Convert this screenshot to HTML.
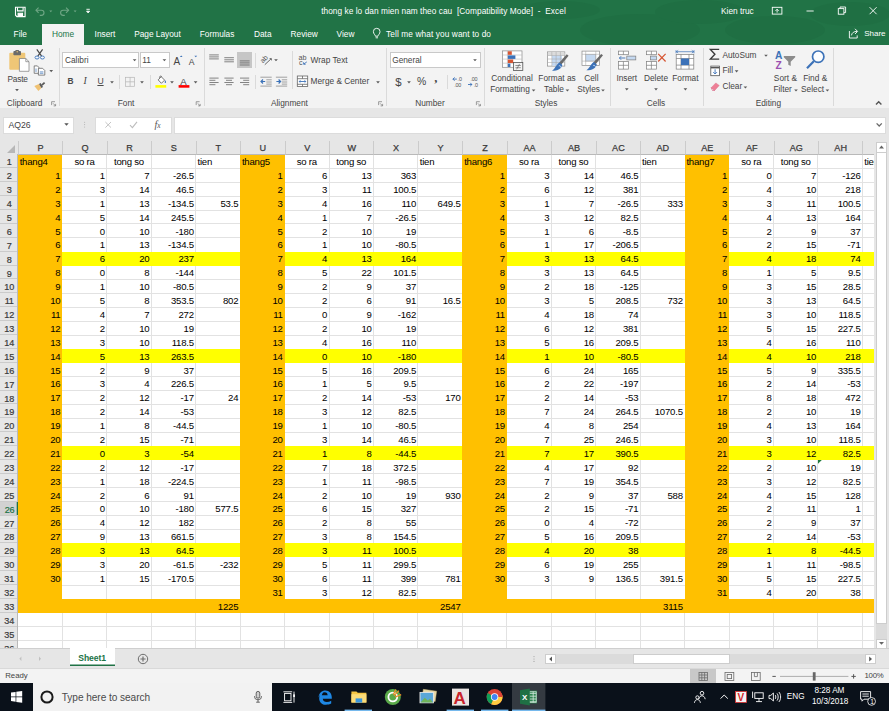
<!DOCTYPE html>
<html lang="en"><head><meta charset="utf-8"><title>thong ke lo dan mien nam theo cau - Excel</title>
<style>
*{box-sizing:border-box;margin:0;padding:0}
html,body{width:889px;height:711px;overflow:hidden;background:#fff}
body{position:relative;font-family:"Liberation Sans",sans-serif;font-size:8.4px;color:#333}
.abs{position:absolute}
#grid{position:absolute;left:0;top:0;width:874px;height:648px;overflow:hidden}
.fo{position:absolute;background:#ffc000}
.fy{position:absolute;background:#ffff00}
.hl{position:absolute;height:1px;background:#e2e2e2}
.vl{position:absolute;width:1px;background:#e2e2e2}
.c{position:absolute;height:13.89px;line-height:14.6px;font-size:9.6px;color:#000;white-space:nowrap;letter-spacing:-0.22px}
.c.r{text-align:right;padding-right:1.8px}
.c.l{text-align:left;padding-left:1.8px}
.c.m{text-align:center}
.tri{position:absolute;width:0;height:0;border-top:3.5px solid #1e7a3c;border-right:3.5px solid transparent}
#colhdr{position:absolute;left:0;top:135px;width:874px;height:20px;background:#e6e6e6;overflow:hidden}
#colhdr .corner{position:absolute;left:7px;top:9.5px;width:0;height:0;border-bottom:8px solid #b7b7b7;border-left:8px solid transparent}
.ch{position:absolute;top:6.3px;height:13.7px;line-height:14.6px;text-align:center;font-size:9.1px;color:#3a3a3a;-webkit-text-stroke:0.25px #3a3a3a;border-left:1px solid #cbcbcb;border-bottom:1px solid #b9b9b9}
.ch.last{border-left:1px solid #cbcbcb}
#rowhdr{position:absolute;left:0;top:154.45px;width:17.85px;height:493.55px;background:#e6e6e6;overflow:hidden}
#rowhdr .rline{position:absolute;left:16.95px;top:0;width:0.9px;height:100%;background:#b9b9b9}
.rh{position:absolute;left:0;width:16.95px;padding-left:1.4px;height:13.89px;line-height:16.6px;text-align:center;font-size:9.1px;color:#3a3a3a;-webkit-text-stroke:0.2px #3a3a3a;border-bottom:1px solid #cbcbcb;margin-top:-154.45px;letter-spacing:-0.2px}
.rh.sel{background:#d2d2d2;color:#217346;-webkit-text-stroke:0.2px #217346;box-shadow:inset -1.3px 0 0 #217346;width:17.85px;z-index:2}

#title{position:absolute;left:0;top:0;width:889px;height:44.5px;background:#217346;overflow:hidden}
#title .t{position:absolute;color:#fff;white-space:nowrap;font-size:8.3px;line-height:10px}
#hometab{position:absolute;left:42.2px;top:23.7px;width:41.8px;height:21px;background:#f3f3f3;color:#217346;font-size:8.3px;line-height:10px;text-align:center;padding-top:5.6px}
#ribbon{position:absolute;left:0;top:44.5px;width:889px;height:64px;background:#f3f3f3;border-bottom:1px solid #dadada}
#fbar{position:absolute;left:0;top:108.2px;width:889px;height:33.2px;background:#e6e6e6}
#fbar .box{position:absolute;top:8.5px;height:16.9px;background:#fff;border:1px solid #dcdcdc}
#fbar .t{position:absolute;font-size:8.7px;line-height:10px;color:#444;white-space:nowrap}

#ribbon .t{position:absolute;font-size:8.3px;line-height:10px;color:#444;white-space:nowrap}
#ribbon .tc{position:absolute;font-size:8.3px;line-height:10px;color:#444;white-space:nowrap;text-align:center;transform:translateX(-50%)}
#ribbon .sep{position:absolute;width:1px;background:#dadada}
#ribbon .inp{position:absolute;background:#fff;border:1px solid #c9c9c9;height:15.4px}
#ribbon .ar{position:absolute;width:0;height:0;border-left:1.9px solid transparent;border-right:1.9px solid transparent;border-top:2.1px solid #5a5a5a}

#vscroll{position:absolute;left:874px;top:141.4px;width:15px;height:506.6px;background:#e6e6e6}
#vscroll .b{position:absolute;left:2.400px;width:10.200px;background:#fff;border:1px solid #cdcdcd}
#vscroll .tr{position:absolute;left:2.400px;width:10.200px;top:1px;height:505.6px;background:#dbdbdb}
#tabbar{position:absolute;left:0;top:648px;width:889px;height:20px;background:#e6e6e6;border-top:1px solid #cfcfcf}
#sheet1{position:absolute;left:69.6px;top:-1px;width:45px;height:18.4px;background:#fff;box-shadow:inset 0 -1.6px 0 #217346;color:#217346;font-weight:bold;font-size:8.6px;line-height:10px;text-align:center;padding-top:5px;letter-spacing:-0.1px}
#hscroll .b{position:absolute;top:4.6px;height:10.6px;background:#fff;border:1px solid #cdcdcd}
#hscroll .tr{position:absolute;left:545px;width:330.6px;top:4.6px;height:10.6px;background:#dbdbdb}
#status{position:absolute;left:0;top:668px;width:889px;height:15.2px;background:#f3f3f3;border-top:1px solid #d9d9d9}
#status .t{position:absolute;font-size:7.8px;line-height:10px;color:#444;white-space:nowrap}
#taskbar{position:absolute;left:0;top:683px;width:889px;height:28px;background:#0a111a;overflow:hidden}
#search{position:absolute;left:33.2px;top:0;width:238.8px;height:28px;background:#f2f2f2}
#search .t{position:absolute;left:28.6px;top:8.8px;font-size:10.1px;line-height:12px;color:#4a4a4a;white-space:nowrap;letter-spacing:-0.05px}
#taskbar .w{position:absolute;color:#fff;white-space:nowrap;font-size:8.2px;line-height:10px}
</style></head>
<body>
<div id="grid">
<div class="fo" style="left:17.85px;top:154.45px;width:44.45px;height:458.37px"></div>
<div class="fo" style="left:240.1px;top:154.45px;width:44.45px;height:458.37px"></div>
<div class="fo" style="left:462.35px;top:154.45px;width:44.45px;height:458.37px"></div>
<div class="fo" style="left:684.6px;top:154.45px;width:44.45px;height:458.37px"></div>
<div class="fo" style="left:17.85px;top:598.93px;width:856.15px;height:13.89px"></div>
<div class="fy" style="left:62.3px;top:251.68px;width:177.8px;height:13.89px"></div>
<div class="fy" style="left:284.55px;top:251.68px;width:177.8px;height:13.89px"></div>
<div class="fy" style="left:506.8px;top:251.68px;width:177.8px;height:13.89px"></div>
<div class="fy" style="left:729.05px;top:251.68px;width:144.95px;height:13.89px"></div>
<div class="fy" style="left:62.3px;top:348.91px;width:177.8px;height:13.89px"></div>
<div class="fy" style="left:284.55px;top:348.91px;width:177.8px;height:13.89px"></div>
<div class="fy" style="left:506.8px;top:348.91px;width:177.8px;height:13.89px"></div>
<div class="fy" style="left:729.05px;top:348.91px;width:144.95px;height:13.89px"></div>
<div class="fy" style="left:62.3px;top:446.14px;width:177.8px;height:13.89px"></div>
<div class="fy" style="left:284.55px;top:446.14px;width:177.8px;height:13.89px"></div>
<div class="fy" style="left:506.8px;top:446.14px;width:177.8px;height:13.89px"></div>
<div class="fy" style="left:729.05px;top:446.14px;width:144.95px;height:13.89px"></div>
<div class="fy" style="left:62.3px;top:543.37px;width:177.8px;height:13.89px"></div>
<div class="fy" style="left:284.55px;top:543.37px;width:177.8px;height:13.89px"></div>
<div class="fy" style="left:506.8px;top:543.37px;width:177.8px;height:13.89px"></div>
<div class="fy" style="left:729.05px;top:543.37px;width:144.95px;height:13.89px"></div>
<div class="hl" style="left:62.3px;top:167.84px;width:177.8px"></div>
<div class="hl" style="left:284.55px;top:167.84px;width:177.8px"></div>
<div class="hl" style="left:506.8px;top:167.84px;width:177.8px"></div>
<div class="hl" style="left:729.05px;top:167.84px;width:144.95px"></div>
<div class="hl" style="left:62.3px;top:181.73px;width:177.8px"></div>
<div class="hl" style="left:284.55px;top:181.73px;width:177.8px"></div>
<div class="hl" style="left:506.8px;top:181.73px;width:177.8px"></div>
<div class="hl" style="left:729.05px;top:181.73px;width:144.95px"></div>
<div class="hl" style="left:62.3px;top:195.62px;width:177.8px"></div>
<div class="hl" style="left:284.55px;top:195.62px;width:177.8px"></div>
<div class="hl" style="left:506.8px;top:195.62px;width:177.8px"></div>
<div class="hl" style="left:729.05px;top:195.62px;width:144.95px"></div>
<div class="hl" style="left:62.3px;top:209.51px;width:177.8px"></div>
<div class="hl" style="left:284.55px;top:209.51px;width:177.8px"></div>
<div class="hl" style="left:506.8px;top:209.51px;width:177.8px"></div>
<div class="hl" style="left:729.05px;top:209.51px;width:144.95px"></div>
<div class="hl" style="left:62.3px;top:223.4px;width:177.8px"></div>
<div class="hl" style="left:284.55px;top:223.4px;width:177.8px"></div>
<div class="hl" style="left:506.8px;top:223.4px;width:177.8px"></div>
<div class="hl" style="left:729.05px;top:223.4px;width:144.95px"></div>
<div class="hl" style="left:62.3px;top:237.29px;width:177.8px"></div>
<div class="hl" style="left:284.55px;top:237.29px;width:177.8px"></div>
<div class="hl" style="left:506.8px;top:237.29px;width:177.8px"></div>
<div class="hl" style="left:729.05px;top:237.29px;width:144.95px"></div>
<div class="hl" style="left:62.3px;top:278.96px;width:177.8px"></div>
<div class="hl" style="left:284.55px;top:278.96px;width:177.8px"></div>
<div class="hl" style="left:506.8px;top:278.96px;width:177.8px"></div>
<div class="hl" style="left:729.05px;top:278.96px;width:144.95px"></div>
<div class="hl" style="left:62.3px;top:292.85px;width:177.8px"></div>
<div class="hl" style="left:284.55px;top:292.85px;width:177.8px"></div>
<div class="hl" style="left:506.8px;top:292.85px;width:177.8px"></div>
<div class="hl" style="left:729.05px;top:292.85px;width:144.95px"></div>
<div class="hl" style="left:62.3px;top:306.74px;width:177.8px"></div>
<div class="hl" style="left:284.55px;top:306.74px;width:177.8px"></div>
<div class="hl" style="left:506.8px;top:306.74px;width:177.8px"></div>
<div class="hl" style="left:729.05px;top:306.74px;width:144.95px"></div>
<div class="hl" style="left:62.3px;top:320.63px;width:177.8px"></div>
<div class="hl" style="left:284.55px;top:320.63px;width:177.8px"></div>
<div class="hl" style="left:506.8px;top:320.63px;width:177.8px"></div>
<div class="hl" style="left:729.05px;top:320.63px;width:144.95px"></div>
<div class="hl" style="left:62.3px;top:334.52px;width:177.8px"></div>
<div class="hl" style="left:284.55px;top:334.52px;width:177.8px"></div>
<div class="hl" style="left:506.8px;top:334.52px;width:177.8px"></div>
<div class="hl" style="left:729.05px;top:334.52px;width:144.95px"></div>
<div class="hl" style="left:62.3px;top:376.19px;width:177.8px"></div>
<div class="hl" style="left:284.55px;top:376.19px;width:177.8px"></div>
<div class="hl" style="left:506.8px;top:376.19px;width:177.8px"></div>
<div class="hl" style="left:729.05px;top:376.19px;width:144.95px"></div>
<div class="hl" style="left:62.3px;top:390.08px;width:177.8px"></div>
<div class="hl" style="left:284.55px;top:390.08px;width:177.8px"></div>
<div class="hl" style="left:506.8px;top:390.08px;width:177.8px"></div>
<div class="hl" style="left:729.05px;top:390.08px;width:144.95px"></div>
<div class="hl" style="left:62.3px;top:403.97px;width:177.8px"></div>
<div class="hl" style="left:284.55px;top:403.97px;width:177.8px"></div>
<div class="hl" style="left:506.8px;top:403.97px;width:177.8px"></div>
<div class="hl" style="left:729.05px;top:403.97px;width:144.95px"></div>
<div class="hl" style="left:62.3px;top:417.86px;width:177.8px"></div>
<div class="hl" style="left:284.55px;top:417.86px;width:177.8px"></div>
<div class="hl" style="left:506.8px;top:417.86px;width:177.8px"></div>
<div class="hl" style="left:729.05px;top:417.86px;width:144.95px"></div>
<div class="hl" style="left:62.3px;top:431.75px;width:177.8px"></div>
<div class="hl" style="left:284.55px;top:431.75px;width:177.8px"></div>
<div class="hl" style="left:506.8px;top:431.75px;width:177.8px"></div>
<div class="hl" style="left:729.05px;top:431.75px;width:144.95px"></div>
<div class="hl" style="left:62.3px;top:473.42px;width:177.8px"></div>
<div class="hl" style="left:284.55px;top:473.42px;width:177.8px"></div>
<div class="hl" style="left:506.8px;top:473.42px;width:177.8px"></div>
<div class="hl" style="left:729.05px;top:473.42px;width:144.95px"></div>
<div class="hl" style="left:62.3px;top:487.31px;width:177.8px"></div>
<div class="hl" style="left:284.55px;top:487.31px;width:177.8px"></div>
<div class="hl" style="left:506.8px;top:487.31px;width:177.8px"></div>
<div class="hl" style="left:729.05px;top:487.31px;width:144.95px"></div>
<div class="hl" style="left:62.3px;top:501.2px;width:177.8px"></div>
<div class="hl" style="left:284.55px;top:501.2px;width:177.8px"></div>
<div class="hl" style="left:506.8px;top:501.2px;width:177.8px"></div>
<div class="hl" style="left:729.05px;top:501.2px;width:144.95px"></div>
<div class="hl" style="left:62.3px;top:515.09px;width:177.8px"></div>
<div class="hl" style="left:284.55px;top:515.09px;width:177.8px"></div>
<div class="hl" style="left:506.8px;top:515.09px;width:177.8px"></div>
<div class="hl" style="left:729.05px;top:515.09px;width:144.95px"></div>
<div class="hl" style="left:62.3px;top:528.98px;width:177.8px"></div>
<div class="hl" style="left:284.55px;top:528.98px;width:177.8px"></div>
<div class="hl" style="left:506.8px;top:528.98px;width:177.8px"></div>
<div class="hl" style="left:729.05px;top:528.98px;width:144.95px"></div>
<div class="hl" style="left:62.3px;top:570.65px;width:177.8px"></div>
<div class="hl" style="left:284.55px;top:570.65px;width:177.8px"></div>
<div class="hl" style="left:506.8px;top:570.65px;width:177.8px"></div>
<div class="hl" style="left:729.05px;top:570.65px;width:144.95px"></div>
<div class="hl" style="left:62.3px;top:584.54px;width:177.8px"></div>
<div class="hl" style="left:284.55px;top:584.54px;width:177.8px"></div>
<div class="hl" style="left:506.8px;top:584.54px;width:177.8px"></div>
<div class="hl" style="left:729.05px;top:584.54px;width:144.95px"></div>
<div class="hl" style="left:17.85px;top:626.21px;width:856.15px"></div>
<div class="hl" style="left:17.85px;top:640.1px;width:856.15px"></div>
<div class="vl" style="left:61.8px;top:612.82px;height:35.18px"></div>
<div class="vl" style="left:106.25px;top:154.45px;height:97.23px"></div>
<div class="vl" style="left:106.25px;top:265.57px;height:83.34px"></div>
<div class="vl" style="left:106.25px;top:362.8px;height:83.34px"></div>
<div class="vl" style="left:106.25px;top:460.03px;height:83.34px"></div>
<div class="vl" style="left:106.25px;top:557.26px;height:41.67px"></div>
<div class="vl" style="left:106.25px;top:612.82px;height:35.18px"></div>
<div class="vl" style="left:150.7px;top:154.45px;height:97.23px"></div>
<div class="vl" style="left:150.7px;top:265.57px;height:83.34px"></div>
<div class="vl" style="left:150.7px;top:362.8px;height:83.34px"></div>
<div class="vl" style="left:150.7px;top:460.03px;height:83.34px"></div>
<div class="vl" style="left:150.7px;top:557.26px;height:41.67px"></div>
<div class="vl" style="left:150.7px;top:612.82px;height:35.18px"></div>
<div class="vl" style="left:195.15px;top:154.45px;height:97.23px"></div>
<div class="vl" style="left:195.15px;top:265.57px;height:83.34px"></div>
<div class="vl" style="left:195.15px;top:362.8px;height:83.34px"></div>
<div class="vl" style="left:195.15px;top:460.03px;height:83.34px"></div>
<div class="vl" style="left:195.15px;top:557.26px;height:41.67px"></div>
<div class="vl" style="left:195.15px;top:612.82px;height:35.18px"></div>
<div class="vl" style="left:239.6px;top:612.82px;height:35.18px"></div>
<div class="vl" style="left:284.05px;top:612.82px;height:35.18px"></div>
<div class="vl" style="left:328.5px;top:154.45px;height:97.23px"></div>
<div class="vl" style="left:328.5px;top:265.57px;height:83.34px"></div>
<div class="vl" style="left:328.5px;top:362.8px;height:83.34px"></div>
<div class="vl" style="left:328.5px;top:460.03px;height:83.34px"></div>
<div class="vl" style="left:328.5px;top:557.26px;height:41.67px"></div>
<div class="vl" style="left:328.5px;top:612.82px;height:35.18px"></div>
<div class="vl" style="left:372.95px;top:154.45px;height:97.23px"></div>
<div class="vl" style="left:372.95px;top:265.57px;height:83.34px"></div>
<div class="vl" style="left:372.95px;top:362.8px;height:83.34px"></div>
<div class="vl" style="left:372.95px;top:460.03px;height:83.34px"></div>
<div class="vl" style="left:372.95px;top:557.26px;height:41.67px"></div>
<div class="vl" style="left:372.95px;top:612.82px;height:35.18px"></div>
<div class="vl" style="left:417.4px;top:154.45px;height:97.23px"></div>
<div class="vl" style="left:417.4px;top:265.57px;height:83.34px"></div>
<div class="vl" style="left:417.4px;top:362.8px;height:83.34px"></div>
<div class="vl" style="left:417.4px;top:460.03px;height:83.34px"></div>
<div class="vl" style="left:417.4px;top:557.26px;height:41.67px"></div>
<div class="vl" style="left:417.4px;top:612.82px;height:35.18px"></div>
<div class="vl" style="left:461.85px;top:612.82px;height:35.18px"></div>
<div class="vl" style="left:506.3px;top:612.82px;height:35.18px"></div>
<div class="vl" style="left:550.75px;top:154.45px;height:97.23px"></div>
<div class="vl" style="left:550.75px;top:265.57px;height:83.34px"></div>
<div class="vl" style="left:550.75px;top:362.8px;height:83.34px"></div>
<div class="vl" style="left:550.75px;top:460.03px;height:83.34px"></div>
<div class="vl" style="left:550.75px;top:557.26px;height:41.67px"></div>
<div class="vl" style="left:550.75px;top:612.82px;height:35.18px"></div>
<div class="vl" style="left:595.2px;top:154.45px;height:97.23px"></div>
<div class="vl" style="left:595.2px;top:265.57px;height:83.34px"></div>
<div class="vl" style="left:595.2px;top:362.8px;height:83.34px"></div>
<div class="vl" style="left:595.2px;top:460.03px;height:83.34px"></div>
<div class="vl" style="left:595.2px;top:557.26px;height:41.67px"></div>
<div class="vl" style="left:595.2px;top:612.82px;height:35.18px"></div>
<div class="vl" style="left:639.65px;top:154.45px;height:97.23px"></div>
<div class="vl" style="left:639.65px;top:265.57px;height:83.34px"></div>
<div class="vl" style="left:639.65px;top:362.8px;height:83.34px"></div>
<div class="vl" style="left:639.65px;top:460.03px;height:83.34px"></div>
<div class="vl" style="left:639.65px;top:557.26px;height:41.67px"></div>
<div class="vl" style="left:639.65px;top:612.82px;height:35.18px"></div>
<div class="vl" style="left:684.1px;top:612.82px;height:35.18px"></div>
<div class="vl" style="left:728.55px;top:612.82px;height:35.18px"></div>
<div class="vl" style="left:773px;top:154.45px;height:97.23px"></div>
<div class="vl" style="left:773px;top:265.57px;height:83.34px"></div>
<div class="vl" style="left:773px;top:362.8px;height:83.34px"></div>
<div class="vl" style="left:773px;top:460.03px;height:83.34px"></div>
<div class="vl" style="left:773px;top:557.26px;height:41.67px"></div>
<div class="vl" style="left:773px;top:612.82px;height:35.18px"></div>
<div class="vl" style="left:817.45px;top:154.45px;height:97.23px"></div>
<div class="vl" style="left:817.45px;top:265.57px;height:83.34px"></div>
<div class="vl" style="left:817.45px;top:362.8px;height:83.34px"></div>
<div class="vl" style="left:817.45px;top:460.03px;height:83.34px"></div>
<div class="vl" style="left:817.45px;top:557.26px;height:41.67px"></div>
<div class="vl" style="left:817.45px;top:612.82px;height:35.18px"></div>
<div class="vl" style="left:861.9px;top:154.45px;height:97.23px"></div>
<div class="vl" style="left:861.9px;top:265.57px;height:83.34px"></div>
<div class="vl" style="left:861.9px;top:362.8px;height:83.34px"></div>
<div class="vl" style="left:861.9px;top:460.03px;height:83.34px"></div>
<div class="vl" style="left:861.9px;top:557.26px;height:41.67px"></div>
<div class="vl" style="left:861.9px;top:612.82px;height:35.18px"></div>
<div class="c l" style="left:17.85px;top:155.15px;width:44.45px">thang4</div>
<div class="c m" style="left:62.3px;top:155.15px;width:44.45px">so ra</div>
<div class="c m" style="left:106.75px;top:155.15px;width:44.45px">tong so</div>
<div class="c l" style="left:195.65px;top:155.15px;width:44.45px">tien</div>
<div class="c r" style="left:17.85px;top:169.04px;width:44.45px">1</div>
<div class="c r" style="left:62.3px;top:169.04px;width:44.45px">1</div>
<div class="c r" style="left:106.75px;top:169.04px;width:44.45px">7</div>
<div class="c r" style="left:151.2px;top:169.04px;width:44.45px">-26.5</div>
<div class="c r" style="left:17.85px;top:182.93px;width:44.45px">2</div>
<div class="c r" style="left:62.3px;top:182.93px;width:44.45px">3</div>
<div class="c r" style="left:106.75px;top:182.93px;width:44.45px">14</div>
<div class="c r" style="left:151.2px;top:182.93px;width:44.45px">46.5</div>
<div class="c r" style="left:17.85px;top:196.82px;width:44.45px">3</div>
<div class="c r" style="left:62.3px;top:196.82px;width:44.45px">1</div>
<div class="c r" style="left:106.75px;top:196.82px;width:44.45px">13</div>
<div class="c r" style="left:151.2px;top:196.82px;width:44.45px">-134.5</div>
<div class="c r" style="left:195.65px;top:196.82px;width:44.45px">53.5</div>
<div class="c r" style="left:17.85px;top:210.71px;width:44.45px">4</div>
<div class="c r" style="left:62.3px;top:210.71px;width:44.45px">5</div>
<div class="c r" style="left:106.75px;top:210.71px;width:44.45px">14</div>
<div class="c r" style="left:151.2px;top:210.71px;width:44.45px">245.5</div>
<div class="c r" style="left:17.85px;top:224.6px;width:44.45px">5</div>
<div class="c r" style="left:62.3px;top:224.6px;width:44.45px">0</div>
<div class="c r" style="left:106.75px;top:224.6px;width:44.45px">10</div>
<div class="c r" style="left:151.2px;top:224.6px;width:44.45px">-180</div>
<div class="c r" style="left:17.85px;top:238.49px;width:44.45px">6</div>
<div class="c r" style="left:62.3px;top:238.49px;width:44.45px">1</div>
<div class="c r" style="left:106.75px;top:238.49px;width:44.45px">13</div>
<div class="c r" style="left:151.2px;top:238.49px;width:44.45px">-134.5</div>
<div class="c r" style="left:17.85px;top:252.38px;width:44.45px">7</div>
<div class="c r" style="left:62.3px;top:252.38px;width:44.45px">6</div>
<div class="c r" style="left:106.75px;top:252.38px;width:44.45px">20</div>
<div class="c r" style="left:151.2px;top:252.38px;width:44.45px">237</div>
<div class="c r" style="left:17.85px;top:266.27px;width:44.45px">8</div>
<div class="c r" style="left:62.3px;top:266.27px;width:44.45px">0</div>
<div class="c r" style="left:106.75px;top:266.27px;width:44.45px">8</div>
<div class="c r" style="left:151.2px;top:266.27px;width:44.45px">-144</div>
<div class="c r" style="left:17.85px;top:280.16px;width:44.45px">9</div>
<div class="c r" style="left:62.3px;top:280.16px;width:44.45px">1</div>
<div class="c r" style="left:106.75px;top:280.16px;width:44.45px">10</div>
<div class="c r" style="left:151.2px;top:280.16px;width:44.45px">-80.5</div>
<div class="c r" style="left:17.85px;top:294.05px;width:44.45px">10</div>
<div class="c r" style="left:62.3px;top:294.05px;width:44.45px">5</div>
<div class="c r" style="left:106.75px;top:294.05px;width:44.45px">8</div>
<div class="c r" style="left:151.2px;top:294.05px;width:44.45px">353.5</div>
<div class="c r" style="left:195.65px;top:294.05px;width:44.45px">802</div>
<div class="c r" style="left:17.85px;top:307.94px;width:44.45px">11</div>
<div class="c r" style="left:62.3px;top:307.94px;width:44.45px">4</div>
<div class="c r" style="left:106.75px;top:307.94px;width:44.45px">7</div>
<div class="c r" style="left:151.2px;top:307.94px;width:44.45px">272</div>
<div class="c r" style="left:17.85px;top:321.83px;width:44.45px">12</div>
<div class="c r" style="left:62.3px;top:321.83px;width:44.45px">2</div>
<div class="c r" style="left:106.75px;top:321.83px;width:44.45px">10</div>
<div class="c r" style="left:151.2px;top:321.83px;width:44.45px">19</div>
<div class="c r" style="left:17.85px;top:335.72px;width:44.45px">13</div>
<div class="c r" style="left:62.3px;top:335.72px;width:44.45px">3</div>
<div class="c r" style="left:106.75px;top:335.72px;width:44.45px">10</div>
<div class="c r" style="left:151.2px;top:335.72px;width:44.45px">118.5</div>
<div class="c r" style="left:17.85px;top:349.61px;width:44.45px">14</div>
<div class="c r" style="left:62.3px;top:349.61px;width:44.45px">5</div>
<div class="c r" style="left:106.75px;top:349.61px;width:44.45px">13</div>
<div class="c r" style="left:151.2px;top:349.61px;width:44.45px">263.5</div>
<div class="c r" style="left:17.85px;top:363.5px;width:44.45px">15</div>
<div class="c r" style="left:62.3px;top:363.5px;width:44.45px">2</div>
<div class="c r" style="left:106.75px;top:363.5px;width:44.45px">9</div>
<div class="c r" style="left:151.2px;top:363.5px;width:44.45px">37</div>
<div class="c r" style="left:17.85px;top:377.39px;width:44.45px">16</div>
<div class="c r" style="left:62.3px;top:377.39px;width:44.45px">3</div>
<div class="c r" style="left:106.75px;top:377.39px;width:44.45px">4</div>
<div class="c r" style="left:151.2px;top:377.39px;width:44.45px">226.5</div>
<div class="c r" style="left:17.85px;top:391.28px;width:44.45px">17</div>
<div class="c r" style="left:62.3px;top:391.28px;width:44.45px">2</div>
<div class="c r" style="left:106.75px;top:391.28px;width:44.45px">12</div>
<div class="c r" style="left:151.2px;top:391.28px;width:44.45px">-17</div>
<div class="c r" style="left:195.65px;top:391.28px;width:44.45px">24</div>
<div class="c r" style="left:17.85px;top:405.17px;width:44.45px">18</div>
<div class="c r" style="left:62.3px;top:405.17px;width:44.45px">2</div>
<div class="c r" style="left:106.75px;top:405.17px;width:44.45px">14</div>
<div class="c r" style="left:151.2px;top:405.17px;width:44.45px">-53</div>
<div class="c r" style="left:17.85px;top:419.06px;width:44.45px">19</div>
<div class="c r" style="left:62.3px;top:419.06px;width:44.45px">1</div>
<div class="c r" style="left:106.75px;top:419.06px;width:44.45px">8</div>
<div class="c r" style="left:151.2px;top:419.06px;width:44.45px">-44.5</div>
<div class="c r" style="left:17.85px;top:432.95px;width:44.45px">20</div>
<div class="c r" style="left:62.3px;top:432.95px;width:44.45px">2</div>
<div class="c r" style="left:106.75px;top:432.95px;width:44.45px">15</div>
<div class="c r" style="left:151.2px;top:432.95px;width:44.45px">-71</div>
<div class="c r" style="left:17.85px;top:446.84px;width:44.45px">21</div>
<div class="c r" style="left:62.3px;top:446.84px;width:44.45px">0</div>
<div class="c r" style="left:106.75px;top:446.84px;width:44.45px">3</div>
<div class="c r" style="left:151.2px;top:446.84px;width:44.45px">-54</div>
<div class="c r" style="left:17.85px;top:460.73px;width:44.45px">22</div>
<div class="c r" style="left:62.3px;top:460.73px;width:44.45px">2</div>
<div class="c r" style="left:106.75px;top:460.73px;width:44.45px">12</div>
<div class="c r" style="left:151.2px;top:460.73px;width:44.45px">-17</div>
<div class="c r" style="left:17.85px;top:474.62px;width:44.45px">23</div>
<div class="c r" style="left:62.3px;top:474.62px;width:44.45px">1</div>
<div class="c r" style="left:106.75px;top:474.62px;width:44.45px">18</div>
<div class="c r" style="left:151.2px;top:474.62px;width:44.45px">-224.5</div>
<div class="c r" style="left:17.85px;top:488.51px;width:44.45px">24</div>
<div class="c r" style="left:62.3px;top:488.51px;width:44.45px">2</div>
<div class="c r" style="left:106.75px;top:488.51px;width:44.45px">6</div>
<div class="c r" style="left:151.2px;top:488.51px;width:44.45px">91</div>
<div class="c r" style="left:17.85px;top:502.4px;width:44.45px">25</div>
<div class="c r" style="left:62.3px;top:502.4px;width:44.45px">0</div>
<div class="c r" style="left:106.75px;top:502.4px;width:44.45px">10</div>
<div class="c r" style="left:151.2px;top:502.4px;width:44.45px">-180</div>
<div class="c r" style="left:195.65px;top:502.4px;width:44.45px">577.5</div>
<div class="c r" style="left:17.85px;top:516.29px;width:44.45px">26</div>
<div class="c r" style="left:62.3px;top:516.29px;width:44.45px">4</div>
<div class="c r" style="left:106.75px;top:516.29px;width:44.45px">12</div>
<div class="c r" style="left:151.2px;top:516.29px;width:44.45px">182</div>
<div class="c r" style="left:17.85px;top:530.18px;width:44.45px">27</div>
<div class="c r" style="left:62.3px;top:530.18px;width:44.45px">9</div>
<div class="c r" style="left:106.75px;top:530.18px;width:44.45px">13</div>
<div class="c r" style="left:151.2px;top:530.18px;width:44.45px">661.5</div>
<div class="c r" style="left:17.85px;top:544.07px;width:44.45px">28</div>
<div class="c r" style="left:62.3px;top:544.07px;width:44.45px">3</div>
<div class="c r" style="left:106.75px;top:544.07px;width:44.45px">13</div>
<div class="c r" style="left:151.2px;top:544.07px;width:44.45px">64.5</div>
<div class="c r" style="left:17.85px;top:557.96px;width:44.45px">29</div>
<div class="c r" style="left:62.3px;top:557.96px;width:44.45px">3</div>
<div class="c r" style="left:106.75px;top:557.96px;width:44.45px">20</div>
<div class="c r" style="left:151.2px;top:557.96px;width:44.45px">-61.5</div>
<div class="c r" style="left:195.65px;top:557.96px;width:44.45px">-232</div>
<div class="c r" style="left:17.85px;top:571.85px;width:44.45px">30</div>
<div class="c r" style="left:62.3px;top:571.85px;width:44.45px">1</div>
<div class="c r" style="left:106.75px;top:571.85px;width:44.45px">15</div>
<div class="c r" style="left:151.2px;top:571.85px;width:44.45px">-170.5</div>
<div class="c r" style="left:195.65px;top:599.63px;width:44.45px">1225</div>
<div class="c l" style="left:240.1px;top:155.15px;width:44.45px">thang5</div>
<div class="c m" style="left:284.55px;top:155.15px;width:44.45px">so ra</div>
<div class="c m" style="left:329px;top:155.15px;width:44.45px">tong so</div>
<div class="c l" style="left:417.9px;top:155.15px;width:44.45px">tien</div>
<div class="c r" style="left:240.1px;top:169.04px;width:44.45px">1</div>
<div class="c r" style="left:284.55px;top:169.04px;width:44.45px">6</div>
<div class="c r" style="left:329px;top:169.04px;width:44.45px">13</div>
<div class="c r" style="left:373.45px;top:169.04px;width:44.45px">363</div>
<div class="c r" style="left:240.1px;top:182.93px;width:44.45px">2</div>
<div class="c r" style="left:284.55px;top:182.93px;width:44.45px">3</div>
<div class="c r" style="left:329px;top:182.93px;width:44.45px">11</div>
<div class="c r" style="left:373.45px;top:182.93px;width:44.45px">100.5</div>
<div class="c r" style="left:240.1px;top:196.82px;width:44.45px">3</div>
<div class="c r" style="left:284.55px;top:196.82px;width:44.45px">4</div>
<div class="c r" style="left:329px;top:196.82px;width:44.45px">16</div>
<div class="c r" style="left:373.45px;top:196.82px;width:44.45px">110</div>
<div class="c r" style="left:417.9px;top:196.82px;width:44.45px">649.5</div>
<div class="c r" style="left:240.1px;top:210.71px;width:44.45px">4</div>
<div class="c r" style="left:284.55px;top:210.71px;width:44.45px">1</div>
<div class="c r" style="left:329px;top:210.71px;width:44.45px">7</div>
<div class="c r" style="left:373.45px;top:210.71px;width:44.45px">-26.5</div>
<div class="c r" style="left:240.1px;top:224.6px;width:44.45px">5</div>
<div class="c r" style="left:284.55px;top:224.6px;width:44.45px">2</div>
<div class="c r" style="left:329px;top:224.6px;width:44.45px">10</div>
<div class="c r" style="left:373.45px;top:224.6px;width:44.45px">19</div>
<div class="c r" style="left:240.1px;top:238.49px;width:44.45px">6</div>
<div class="c r" style="left:284.55px;top:238.49px;width:44.45px">1</div>
<div class="c r" style="left:329px;top:238.49px;width:44.45px">10</div>
<div class="c r" style="left:373.45px;top:238.49px;width:44.45px">-80.5</div>
<div class="c r" style="left:240.1px;top:252.38px;width:44.45px">7</div>
<div class="c r" style="left:284.55px;top:252.38px;width:44.45px">4</div>
<div class="c r" style="left:329px;top:252.38px;width:44.45px">13</div>
<div class="c r" style="left:373.45px;top:252.38px;width:44.45px">164</div>
<div class="c r" style="left:240.1px;top:266.27px;width:44.45px">8</div>
<div class="c r" style="left:284.55px;top:266.27px;width:44.45px">5</div>
<div class="c r" style="left:329px;top:266.27px;width:44.45px">22</div>
<div class="c r" style="left:373.45px;top:266.27px;width:44.45px">101.5</div>
<div class="c r" style="left:240.1px;top:280.16px;width:44.45px">9</div>
<div class="c r" style="left:284.55px;top:280.16px;width:44.45px">2</div>
<div class="c r" style="left:329px;top:280.16px;width:44.45px">9</div>
<div class="c r" style="left:373.45px;top:280.16px;width:44.45px">37</div>
<div class="c r" style="left:240.1px;top:294.05px;width:44.45px">10</div>
<div class="c r" style="left:284.55px;top:294.05px;width:44.45px">2</div>
<div class="c r" style="left:329px;top:294.05px;width:44.45px">6</div>
<div class="c r" style="left:373.45px;top:294.05px;width:44.45px">91</div>
<div class="c r" style="left:417.9px;top:294.05px;width:44.45px">16.5</div>
<div class="c r" style="left:240.1px;top:307.94px;width:44.45px">11</div>
<div class="c r" style="left:284.55px;top:307.94px;width:44.45px">0</div>
<div class="c r" style="left:329px;top:307.94px;width:44.45px">9</div>
<div class="c r" style="left:373.45px;top:307.94px;width:44.45px">-162</div>
<div class="c r" style="left:240.1px;top:321.83px;width:44.45px">12</div>
<div class="c r" style="left:284.55px;top:321.83px;width:44.45px">2</div>
<div class="c r" style="left:329px;top:321.83px;width:44.45px">10</div>
<div class="c r" style="left:373.45px;top:321.83px;width:44.45px">19</div>
<div class="c r" style="left:240.1px;top:335.72px;width:44.45px">13</div>
<div class="c r" style="left:284.55px;top:335.72px;width:44.45px">4</div>
<div class="c r" style="left:329px;top:335.72px;width:44.45px">16</div>
<div class="c r" style="left:373.45px;top:335.72px;width:44.45px">110</div>
<div class="c r" style="left:240.1px;top:349.61px;width:44.45px">14</div>
<div class="c r" style="left:284.55px;top:349.61px;width:44.45px">0</div>
<div class="c r" style="left:329px;top:349.61px;width:44.45px">10</div>
<div class="c r" style="left:373.45px;top:349.61px;width:44.45px">-180</div>
<div class="c r" style="left:240.1px;top:363.5px;width:44.45px">15</div>
<div class="c r" style="left:284.55px;top:363.5px;width:44.45px">5</div>
<div class="c r" style="left:329px;top:363.5px;width:44.45px">16</div>
<div class="c r" style="left:373.45px;top:363.5px;width:44.45px">209.5</div>
<div class="c r" style="left:240.1px;top:377.39px;width:44.45px">16</div>
<div class="c r" style="left:284.55px;top:377.39px;width:44.45px">1</div>
<div class="c r" style="left:329px;top:377.39px;width:44.45px">5</div>
<div class="c r" style="left:373.45px;top:377.39px;width:44.45px">9.5</div>
<div class="c r" style="left:240.1px;top:391.28px;width:44.45px">17</div>
<div class="c r" style="left:284.55px;top:391.28px;width:44.45px">2</div>
<div class="c r" style="left:329px;top:391.28px;width:44.45px">14</div>
<div class="c r" style="left:373.45px;top:391.28px;width:44.45px">-53</div>
<div class="c r" style="left:417.9px;top:391.28px;width:44.45px">170</div>
<div class="c r" style="left:240.1px;top:405.17px;width:44.45px">18</div>
<div class="c r" style="left:284.55px;top:405.17px;width:44.45px">3</div>
<div class="c r" style="left:329px;top:405.17px;width:44.45px">12</div>
<div class="c r" style="left:373.45px;top:405.17px;width:44.45px">82.5</div>
<div class="c r" style="left:240.1px;top:419.06px;width:44.45px">19</div>
<div class="c r" style="left:284.55px;top:419.06px;width:44.45px">1</div>
<div class="c r" style="left:329px;top:419.06px;width:44.45px">10</div>
<div class="c r" style="left:373.45px;top:419.06px;width:44.45px">-80.5</div>
<div class="c r" style="left:240.1px;top:432.95px;width:44.45px">20</div>
<div class="c r" style="left:284.55px;top:432.95px;width:44.45px">3</div>
<div class="c r" style="left:329px;top:432.95px;width:44.45px">14</div>
<div class="c r" style="left:373.45px;top:432.95px;width:44.45px">46.5</div>
<div class="c r" style="left:240.1px;top:446.84px;width:44.45px">21</div>
<div class="c r" style="left:284.55px;top:446.84px;width:44.45px">1</div>
<div class="c r" style="left:329px;top:446.84px;width:44.45px">8</div>
<div class="c r" style="left:373.45px;top:446.84px;width:44.45px">-44.5</div>
<div class="c r" style="left:240.1px;top:460.73px;width:44.45px">22</div>
<div class="c r" style="left:284.55px;top:460.73px;width:44.45px">7</div>
<div class="c r" style="left:329px;top:460.73px;width:44.45px">18</div>
<div class="c r" style="left:373.45px;top:460.73px;width:44.45px">372.5</div>
<div class="c r" style="left:240.1px;top:474.62px;width:44.45px">23</div>
<div class="c r" style="left:284.55px;top:474.62px;width:44.45px">1</div>
<div class="c r" style="left:329px;top:474.62px;width:44.45px">11</div>
<div class="c r" style="left:373.45px;top:474.62px;width:44.45px">-98.5</div>
<div class="c r" style="left:240.1px;top:488.51px;width:44.45px">24</div>
<div class="c r" style="left:284.55px;top:488.51px;width:44.45px">2</div>
<div class="c r" style="left:329px;top:488.51px;width:44.45px">10</div>
<div class="c r" style="left:373.45px;top:488.51px;width:44.45px">19</div>
<div class="c r" style="left:417.9px;top:488.51px;width:44.45px">930</div>
<div class="c r" style="left:240.1px;top:502.4px;width:44.45px">25</div>
<div class="c r" style="left:284.55px;top:502.4px;width:44.45px">6</div>
<div class="c r" style="left:329px;top:502.4px;width:44.45px">15</div>
<div class="c r" style="left:373.45px;top:502.4px;width:44.45px">327</div>
<div class="c r" style="left:240.1px;top:516.29px;width:44.45px">26</div>
<div class="c r" style="left:284.55px;top:516.29px;width:44.45px">2</div>
<div class="c r" style="left:329px;top:516.29px;width:44.45px">8</div>
<div class="c r" style="left:373.45px;top:516.29px;width:44.45px">55</div>
<div class="c r" style="left:240.1px;top:530.18px;width:44.45px">27</div>
<div class="c r" style="left:284.55px;top:530.18px;width:44.45px">3</div>
<div class="c r" style="left:329px;top:530.18px;width:44.45px">8</div>
<div class="c r" style="left:373.45px;top:530.18px;width:44.45px">154.5</div>
<div class="c r" style="left:240.1px;top:544.07px;width:44.45px">28</div>
<div class="c r" style="left:284.55px;top:544.07px;width:44.45px">3</div>
<div class="c r" style="left:329px;top:544.07px;width:44.45px">11</div>
<div class="c r" style="left:373.45px;top:544.07px;width:44.45px">100.5</div>
<div class="c r" style="left:240.1px;top:557.96px;width:44.45px">29</div>
<div class="c r" style="left:284.55px;top:557.96px;width:44.45px">5</div>
<div class="c r" style="left:329px;top:557.96px;width:44.45px">11</div>
<div class="c r" style="left:373.45px;top:557.96px;width:44.45px">299.5</div>
<div class="c r" style="left:240.1px;top:571.85px;width:44.45px">30</div>
<div class="c r" style="left:284.55px;top:571.85px;width:44.45px">6</div>
<div class="c r" style="left:329px;top:571.85px;width:44.45px">11</div>
<div class="c r" style="left:373.45px;top:571.85px;width:44.45px">399</div>
<div class="c r" style="left:417.9px;top:571.85px;width:44.45px">781</div>
<div class="c r" style="left:240.1px;top:585.74px;width:44.45px">31</div>
<div class="c r" style="left:284.55px;top:585.74px;width:44.45px">3</div>
<div class="c r" style="left:329px;top:585.74px;width:44.45px">12</div>
<div class="c r" style="left:373.45px;top:585.74px;width:44.45px">82.5</div>
<div class="c r" style="left:417.9px;top:599.63px;width:44.45px">2547</div>
<div class="c l" style="left:462.35px;top:155.15px;width:44.45px">thang6</div>
<div class="c m" style="left:506.8px;top:155.15px;width:44.45px">so ra</div>
<div class="c m" style="left:551.25px;top:155.15px;width:44.45px">tong so</div>
<div class="c l" style="left:640.15px;top:155.15px;width:44.45px">tien</div>
<div class="c r" style="left:462.35px;top:169.04px;width:44.45px">1</div>
<div class="c r" style="left:506.8px;top:169.04px;width:44.45px">3</div>
<div class="c r" style="left:551.25px;top:169.04px;width:44.45px">14</div>
<div class="c r" style="left:595.7px;top:169.04px;width:44.45px">46.5</div>
<div class="c r" style="left:462.35px;top:182.93px;width:44.45px">2</div>
<div class="c r" style="left:506.8px;top:182.93px;width:44.45px">6</div>
<div class="c r" style="left:551.25px;top:182.93px;width:44.45px">12</div>
<div class="c r" style="left:595.7px;top:182.93px;width:44.45px">381</div>
<div class="c r" style="left:462.35px;top:196.82px;width:44.45px">3</div>
<div class="c r" style="left:506.8px;top:196.82px;width:44.45px">1</div>
<div class="c r" style="left:551.25px;top:196.82px;width:44.45px">7</div>
<div class="c r" style="left:595.7px;top:196.82px;width:44.45px">-26.5</div>
<div class="c r" style="left:640.15px;top:196.82px;width:44.45px">333</div>
<div class="c r" style="left:462.35px;top:210.71px;width:44.45px">4</div>
<div class="c r" style="left:506.8px;top:210.71px;width:44.45px">3</div>
<div class="c r" style="left:551.25px;top:210.71px;width:44.45px">12</div>
<div class="c r" style="left:595.7px;top:210.71px;width:44.45px">82.5</div>
<div class="c r" style="left:462.35px;top:224.6px;width:44.45px">5</div>
<div class="c r" style="left:506.8px;top:224.6px;width:44.45px">1</div>
<div class="c r" style="left:551.25px;top:224.6px;width:44.45px">6</div>
<div class="c r" style="left:595.7px;top:224.6px;width:44.45px">-8.5</div>
<div class="c r" style="left:462.35px;top:238.49px;width:44.45px">6</div>
<div class="c r" style="left:506.8px;top:238.49px;width:44.45px">1</div>
<div class="c r" style="left:551.25px;top:238.49px;width:44.45px">17</div>
<div class="c r" style="left:595.7px;top:238.49px;width:44.45px">-206.5</div>
<div class="c r" style="left:462.35px;top:252.38px;width:44.45px">7</div>
<div class="c r" style="left:506.8px;top:252.38px;width:44.45px">3</div>
<div class="c r" style="left:551.25px;top:252.38px;width:44.45px">13</div>
<div class="c r" style="left:595.7px;top:252.38px;width:44.45px">64.5</div>
<div class="c r" style="left:462.35px;top:266.27px;width:44.45px">8</div>
<div class="c r" style="left:506.8px;top:266.27px;width:44.45px">3</div>
<div class="c r" style="left:551.25px;top:266.27px;width:44.45px">13</div>
<div class="c r" style="left:595.7px;top:266.27px;width:44.45px">64.5</div>
<div class="c r" style="left:462.35px;top:280.16px;width:44.45px">9</div>
<div class="c r" style="left:506.8px;top:280.16px;width:44.45px">2</div>
<div class="c r" style="left:551.25px;top:280.16px;width:44.45px">18</div>
<div class="c r" style="left:595.7px;top:280.16px;width:44.45px">-125</div>
<div class="c r" style="left:462.35px;top:294.05px;width:44.45px">10</div>
<div class="c r" style="left:506.8px;top:294.05px;width:44.45px">3</div>
<div class="c r" style="left:551.25px;top:294.05px;width:44.45px">5</div>
<div class="c r" style="left:595.7px;top:294.05px;width:44.45px">208.5</div>
<div class="c r" style="left:640.15px;top:294.05px;width:44.45px">732</div>
<div class="c r" style="left:462.35px;top:307.94px;width:44.45px">11</div>
<div class="c r" style="left:506.8px;top:307.94px;width:44.45px">4</div>
<div class="c r" style="left:551.25px;top:307.94px;width:44.45px">18</div>
<div class="c r" style="left:595.7px;top:307.94px;width:44.45px">74</div>
<div class="c r" style="left:462.35px;top:321.83px;width:44.45px">12</div>
<div class="c r" style="left:506.8px;top:321.83px;width:44.45px">6</div>
<div class="c r" style="left:551.25px;top:321.83px;width:44.45px">12</div>
<div class="c r" style="left:595.7px;top:321.83px;width:44.45px">381</div>
<div class="c r" style="left:462.35px;top:335.72px;width:44.45px">13</div>
<div class="c r" style="left:506.8px;top:335.72px;width:44.45px">5</div>
<div class="c r" style="left:551.25px;top:335.72px;width:44.45px">16</div>
<div class="c r" style="left:595.7px;top:335.72px;width:44.45px">209.5</div>
<div class="c r" style="left:462.35px;top:349.61px;width:44.45px">14</div>
<div class="c r" style="left:506.8px;top:349.61px;width:44.45px">1</div>
<div class="c r" style="left:551.25px;top:349.61px;width:44.45px">10</div>
<div class="c r" style="left:595.7px;top:349.61px;width:44.45px">-80.5</div>
<div class="c r" style="left:462.35px;top:363.5px;width:44.45px">15</div>
<div class="c r" style="left:506.8px;top:363.5px;width:44.45px">6</div>
<div class="c r" style="left:551.25px;top:363.5px;width:44.45px">24</div>
<div class="c r" style="left:595.7px;top:363.5px;width:44.45px">165</div>
<div class="c r" style="left:462.35px;top:377.39px;width:44.45px">16</div>
<div class="c r" style="left:506.8px;top:377.39px;width:44.45px">2</div>
<div class="c r" style="left:551.25px;top:377.39px;width:44.45px">22</div>
<div class="c r" style="left:595.7px;top:377.39px;width:44.45px">-197</div>
<div class="c r" style="left:462.35px;top:391.28px;width:44.45px">17</div>
<div class="c r" style="left:506.8px;top:391.28px;width:44.45px">2</div>
<div class="c r" style="left:551.25px;top:391.28px;width:44.45px">14</div>
<div class="c r" style="left:595.7px;top:391.28px;width:44.45px">-53</div>
<div class="c r" style="left:462.35px;top:405.17px;width:44.45px">18</div>
<div class="c r" style="left:506.8px;top:405.17px;width:44.45px">7</div>
<div class="c r" style="left:551.25px;top:405.17px;width:44.45px">24</div>
<div class="c r" style="left:595.7px;top:405.17px;width:44.45px">264.5</div>
<div class="c r" style="left:640.15px;top:405.17px;width:44.45px">1070.5</div>
<div class="c r" style="left:462.35px;top:419.06px;width:44.45px">19</div>
<div class="c r" style="left:506.8px;top:419.06px;width:44.45px">4</div>
<div class="c r" style="left:551.25px;top:419.06px;width:44.45px">8</div>
<div class="c r" style="left:595.7px;top:419.06px;width:44.45px">254</div>
<div class="c r" style="left:462.35px;top:432.95px;width:44.45px">20</div>
<div class="c r" style="left:506.8px;top:432.95px;width:44.45px">7</div>
<div class="c r" style="left:551.25px;top:432.95px;width:44.45px">25</div>
<div class="c r" style="left:595.7px;top:432.95px;width:44.45px">246.5</div>
<div class="c r" style="left:462.35px;top:446.84px;width:44.45px">21</div>
<div class="c r" style="left:506.8px;top:446.84px;width:44.45px">7</div>
<div class="c r" style="left:551.25px;top:446.84px;width:44.45px">17</div>
<div class="c r" style="left:595.7px;top:446.84px;width:44.45px">390.5</div>
<div class="c r" style="left:462.35px;top:460.73px;width:44.45px">22</div>
<div class="c r" style="left:506.8px;top:460.73px;width:44.45px">4</div>
<div class="c r" style="left:551.25px;top:460.73px;width:44.45px">17</div>
<div class="c r" style="left:595.7px;top:460.73px;width:44.45px">92</div>
<div class="c r" style="left:462.35px;top:474.62px;width:44.45px">23</div>
<div class="c r" style="left:506.8px;top:474.62px;width:44.45px">7</div>
<div class="c r" style="left:551.25px;top:474.62px;width:44.45px">19</div>
<div class="c r" style="left:595.7px;top:474.62px;width:44.45px">354.5</div>
<div class="c r" style="left:462.35px;top:488.51px;width:44.45px">24</div>
<div class="c r" style="left:506.8px;top:488.51px;width:44.45px">2</div>
<div class="c r" style="left:551.25px;top:488.51px;width:44.45px">9</div>
<div class="c r" style="left:595.7px;top:488.51px;width:44.45px">37</div>
<div class="c r" style="left:640.15px;top:488.51px;width:44.45px">588</div>
<div class="c r" style="left:462.35px;top:502.4px;width:44.45px">25</div>
<div class="c r" style="left:506.8px;top:502.4px;width:44.45px">2</div>
<div class="c r" style="left:551.25px;top:502.4px;width:44.45px">15</div>
<div class="c r" style="left:595.7px;top:502.4px;width:44.45px">-71</div>
<div class="c r" style="left:462.35px;top:516.29px;width:44.45px">26</div>
<div class="c r" style="left:506.8px;top:516.29px;width:44.45px">0</div>
<div class="c r" style="left:551.25px;top:516.29px;width:44.45px">4</div>
<div class="c r" style="left:595.7px;top:516.29px;width:44.45px">-72</div>
<div class="c r" style="left:462.35px;top:530.18px;width:44.45px">27</div>
<div class="c r" style="left:506.8px;top:530.18px;width:44.45px">5</div>
<div class="c r" style="left:551.25px;top:530.18px;width:44.45px">16</div>
<div class="c r" style="left:595.7px;top:530.18px;width:44.45px">209.5</div>
<div class="c r" style="left:462.35px;top:544.07px;width:44.45px">28</div>
<div class="c r" style="left:506.8px;top:544.07px;width:44.45px">4</div>
<div class="c r" style="left:551.25px;top:544.07px;width:44.45px">20</div>
<div class="c r" style="left:595.7px;top:544.07px;width:44.45px">38</div>
<div class="c r" style="left:462.35px;top:557.96px;width:44.45px">29</div>
<div class="c r" style="left:506.8px;top:557.96px;width:44.45px">6</div>
<div class="c r" style="left:551.25px;top:557.96px;width:44.45px">19</div>
<div class="c r" style="left:595.7px;top:557.96px;width:44.45px">255</div>
<div class="c r" style="left:462.35px;top:571.85px;width:44.45px">30</div>
<div class="c r" style="left:506.8px;top:571.85px;width:44.45px">3</div>
<div class="c r" style="left:551.25px;top:571.85px;width:44.45px">9</div>
<div class="c r" style="left:595.7px;top:571.85px;width:44.45px">136.5</div>
<div class="c r" style="left:640.15px;top:571.85px;width:44.45px">391.5</div>
<div class="c r" style="left:640.15px;top:599.63px;width:44.45px">3115</div>
<div class="c l" style="left:684.6px;top:155.15px;width:44.45px">thang7</div>
<div class="c m" style="left:729.05px;top:155.15px;width:44.45px">so ra</div>
<div class="c m" style="left:773.5px;top:155.15px;width:44.45px">tong so</div>
<div class="c l" style="left:862.4px;top:155.15px;width:11.6px">tien</div>
<div class="c r" style="left:684.6px;top:169.04px;width:44.45px">1</div>
<div class="c r" style="left:729.05px;top:169.04px;width:44.45px">0</div>
<div class="c r" style="left:773.5px;top:169.04px;width:44.45px">7</div>
<div class="c r" style="left:817.95px;top:169.04px;width:44.45px">-126</div>
<div class="c r" style="left:684.6px;top:182.93px;width:44.45px">2</div>
<div class="c r" style="left:729.05px;top:182.93px;width:44.45px">4</div>
<div class="c r" style="left:773.5px;top:182.93px;width:44.45px">10</div>
<div class="c r" style="left:817.95px;top:182.93px;width:44.45px">218</div>
<div class="c r" style="left:684.6px;top:196.82px;width:44.45px">3</div>
<div class="c r" style="left:729.05px;top:196.82px;width:44.45px">3</div>
<div class="c r" style="left:773.5px;top:196.82px;width:44.45px">11</div>
<div class="c r" style="left:817.95px;top:196.82px;width:44.45px">100.5</div>
<div class="c r" style="left:684.6px;top:210.71px;width:44.45px">4</div>
<div class="c r" style="left:729.05px;top:210.71px;width:44.45px">4</div>
<div class="c r" style="left:773.5px;top:210.71px;width:44.45px">13</div>
<div class="c r" style="left:817.95px;top:210.71px;width:44.45px">164</div>
<div class="c r" style="left:684.6px;top:224.6px;width:44.45px">5</div>
<div class="c r" style="left:729.05px;top:224.6px;width:44.45px">2</div>
<div class="c r" style="left:773.5px;top:224.6px;width:44.45px">9</div>
<div class="c r" style="left:817.95px;top:224.6px;width:44.45px">37</div>
<div class="c r" style="left:684.6px;top:238.49px;width:44.45px">6</div>
<div class="c r" style="left:729.05px;top:238.49px;width:44.45px">2</div>
<div class="c r" style="left:773.5px;top:238.49px;width:44.45px">15</div>
<div class="c r" style="left:817.95px;top:238.49px;width:44.45px">-71</div>
<div class="c r" style="left:684.6px;top:252.38px;width:44.45px">7</div>
<div class="c r" style="left:729.05px;top:252.38px;width:44.45px">4</div>
<div class="c r" style="left:773.5px;top:252.38px;width:44.45px">18</div>
<div class="c r" style="left:817.95px;top:252.38px;width:44.45px">74</div>
<div class="c r" style="left:684.6px;top:266.27px;width:44.45px">8</div>
<div class="c r" style="left:729.05px;top:266.27px;width:44.45px">1</div>
<div class="c r" style="left:773.5px;top:266.27px;width:44.45px">5</div>
<div class="c r" style="left:817.95px;top:266.27px;width:44.45px">9.5</div>
<div class="c r" style="left:684.6px;top:280.16px;width:44.45px">9</div>
<div class="c r" style="left:729.05px;top:280.16px;width:44.45px">3</div>
<div class="c r" style="left:773.5px;top:280.16px;width:44.45px">15</div>
<div class="c r" style="left:817.95px;top:280.16px;width:44.45px">28.5</div>
<div class="c r" style="left:684.6px;top:294.05px;width:44.45px">10</div>
<div class="c r" style="left:729.05px;top:294.05px;width:44.45px">3</div>
<div class="c r" style="left:773.5px;top:294.05px;width:44.45px">13</div>
<div class="c r" style="left:817.95px;top:294.05px;width:44.45px">64.5</div>
<div class="c r" style="left:684.6px;top:307.94px;width:44.45px">11</div>
<div class="c r" style="left:729.05px;top:307.94px;width:44.45px">3</div>
<div class="c r" style="left:773.5px;top:307.94px;width:44.45px">10</div>
<div class="c r" style="left:817.95px;top:307.94px;width:44.45px">118.5</div>
<div class="c r" style="left:684.6px;top:321.83px;width:44.45px">12</div>
<div class="c r" style="left:729.05px;top:321.83px;width:44.45px">5</div>
<div class="c r" style="left:773.5px;top:321.83px;width:44.45px">15</div>
<div class="c r" style="left:817.95px;top:321.83px;width:44.45px">227.5</div>
<div class="c r" style="left:684.6px;top:335.72px;width:44.45px">13</div>
<div class="c r" style="left:729.05px;top:335.72px;width:44.45px">4</div>
<div class="c r" style="left:773.5px;top:335.72px;width:44.45px">16</div>
<div class="c r" style="left:817.95px;top:335.72px;width:44.45px">110</div>
<div class="c r" style="left:684.6px;top:349.61px;width:44.45px">14</div>
<div class="c r" style="left:729.05px;top:349.61px;width:44.45px">4</div>
<div class="c r" style="left:773.5px;top:349.61px;width:44.45px">10</div>
<div class="c r" style="left:817.95px;top:349.61px;width:44.45px">218</div>
<div class="c r" style="left:684.6px;top:363.5px;width:44.45px">15</div>
<div class="c r" style="left:729.05px;top:363.5px;width:44.45px">5</div>
<div class="c r" style="left:773.5px;top:363.5px;width:44.45px">9</div>
<div class="c r" style="left:817.95px;top:363.5px;width:44.45px">335.5</div>
<div class="c r" style="left:684.6px;top:377.39px;width:44.45px">16</div>
<div class="c r" style="left:729.05px;top:377.39px;width:44.45px">2</div>
<div class="c r" style="left:773.5px;top:377.39px;width:44.45px">14</div>
<div class="c r" style="left:817.95px;top:377.39px;width:44.45px">-53</div>
<div class="c r" style="left:684.6px;top:391.28px;width:44.45px">17</div>
<div class="c r" style="left:729.05px;top:391.28px;width:44.45px">8</div>
<div class="c r" style="left:773.5px;top:391.28px;width:44.45px">18</div>
<div class="c r" style="left:817.95px;top:391.28px;width:44.45px">472</div>
<div class="c r" style="left:684.6px;top:405.17px;width:44.45px">18</div>
<div class="c r" style="left:729.05px;top:405.17px;width:44.45px">2</div>
<div class="c r" style="left:773.5px;top:405.17px;width:44.45px">10</div>
<div class="c r" style="left:817.95px;top:405.17px;width:44.45px">19</div>
<div class="c r" style="left:684.6px;top:419.06px;width:44.45px">19</div>
<div class="c r" style="left:729.05px;top:419.06px;width:44.45px">4</div>
<div class="c r" style="left:773.5px;top:419.06px;width:44.45px">13</div>
<div class="c r" style="left:817.95px;top:419.06px;width:44.45px">164</div>
<div class="c r" style="left:684.6px;top:432.95px;width:44.45px">20</div>
<div class="c r" style="left:729.05px;top:432.95px;width:44.45px">3</div>
<div class="c r" style="left:773.5px;top:432.95px;width:44.45px">10</div>
<div class="c r" style="left:817.95px;top:432.95px;width:44.45px">118.5</div>
<div class="c r" style="left:684.6px;top:446.84px;width:44.45px">21</div>
<div class="c r" style="left:729.05px;top:446.84px;width:44.45px">3</div>
<div class="c r" style="left:773.5px;top:446.84px;width:44.45px">12</div>
<div class="c r" style="left:817.95px;top:446.84px;width:44.45px">82.5</div>
<div class="c r" style="left:684.6px;top:460.73px;width:44.45px">22</div>
<div class="c r" style="left:729.05px;top:460.73px;width:44.45px">2</div>
<div class="c r" style="left:773.5px;top:460.73px;width:44.45px">10</div>
<div class="c r" style="left:817.95px;top:460.73px;width:44.45px">19</div>
<div class="c r" style="left:684.6px;top:474.62px;width:44.45px">23</div>
<div class="c r" style="left:729.05px;top:474.62px;width:44.45px">3</div>
<div class="c r" style="left:773.5px;top:474.62px;width:44.45px">12</div>
<div class="c r" style="left:817.95px;top:474.62px;width:44.45px">82.5</div>
<div class="c r" style="left:684.6px;top:488.51px;width:44.45px">24</div>
<div class="c r" style="left:729.05px;top:488.51px;width:44.45px">4</div>
<div class="c r" style="left:773.5px;top:488.51px;width:44.45px">15</div>
<div class="c r" style="left:817.95px;top:488.51px;width:44.45px">128</div>
<div class="c r" style="left:684.6px;top:502.4px;width:44.45px">25</div>
<div class="c r" style="left:729.05px;top:502.4px;width:44.45px">2</div>
<div class="c r" style="left:773.5px;top:502.4px;width:44.45px">11</div>
<div class="c r" style="left:817.95px;top:502.4px;width:44.45px">1</div>
<div class="c r" style="left:684.6px;top:516.29px;width:44.45px">26</div>
<div class="c r" style="left:729.05px;top:516.29px;width:44.45px">2</div>
<div class="c r" style="left:773.5px;top:516.29px;width:44.45px">9</div>
<div class="c r" style="left:817.95px;top:516.29px;width:44.45px">37</div>
<div class="c r" style="left:684.6px;top:530.18px;width:44.45px">27</div>
<div class="c r" style="left:729.05px;top:530.18px;width:44.45px">2</div>
<div class="c r" style="left:773.5px;top:530.18px;width:44.45px">14</div>
<div class="c r" style="left:817.95px;top:530.18px;width:44.45px">-53</div>
<div class="c r" style="left:684.6px;top:544.07px;width:44.45px">28</div>
<div class="c r" style="left:729.05px;top:544.07px;width:44.45px">1</div>
<div class="c r" style="left:773.5px;top:544.07px;width:44.45px">8</div>
<div class="c r" style="left:817.95px;top:544.07px;width:44.45px">-44.5</div>
<div class="c r" style="left:684.6px;top:557.96px;width:44.45px">29</div>
<div class="c r" style="left:729.05px;top:557.96px;width:44.45px">1</div>
<div class="c r" style="left:773.5px;top:557.96px;width:44.45px">11</div>
<div class="c r" style="left:817.95px;top:557.96px;width:44.45px">-98.5</div>
<div class="c r" style="left:684.6px;top:571.85px;width:44.45px">30</div>
<div class="c r" style="left:729.05px;top:571.85px;width:44.45px">5</div>
<div class="c r" style="left:773.5px;top:571.85px;width:44.45px">15</div>
<div class="c r" style="left:817.95px;top:571.85px;width:44.45px">227.5</div>
<div class="c r" style="left:684.6px;top:585.74px;width:44.45px">31</div>
<div class="c r" style="left:729.05px;top:585.74px;width:44.45px">4</div>
<div class="c r" style="left:773.5px;top:585.74px;width:44.45px">20</div>
<div class="c r" style="left:817.95px;top:585.74px;width:44.45px">38</div>
<svg class="abs" style="left:818.15px;top:460.23px" width="5" height="5" viewBox="0 0 5 5"><path d="M0 0h3.8L0 3.8z" fill="#1e7a3c"/></svg>
</div>
<div id="colhdr">
<div class="corner"></div>
<div class="ch" style="left:17.85px;width:44.45px">P</div>
<div class="ch" style="left:62.3px;width:44.45px">Q</div>
<div class="ch" style="left:106.75px;width:44.45px">R</div>
<div class="ch" style="left:151.2px;width:44.45px">S</div>
<div class="ch" style="left:195.65px;width:44.45px">T</div>
<div class="ch" style="left:240.1px;width:44.45px">U</div>
<div class="ch" style="left:284.55px;width:44.45px">V</div>
<div class="ch" style="left:329px;width:44.45px">W</div>
<div class="ch" style="left:373.45px;width:44.45px">X</div>
<div class="ch" style="left:417.9px;width:44.45px">Y</div>
<div class="ch" style="left:462.35px;width:44.45px">Z</div>
<div class="ch" style="left:506.8px;width:44.45px">AA</div>
<div class="ch" style="left:551.25px;width:44.45px">AB</div>
<div class="ch" style="left:595.7px;width:44.45px">AC</div>
<div class="ch" style="left:640.15px;width:44.45px">AD</div>
<div class="ch" style="left:684.6px;width:44.45px">AE</div>
<div class="ch" style="left:729.05px;width:44.45px">AF</div>
<div class="ch" style="left:773.5px;width:44.45px">AG</div>
<div class="ch" style="left:817.95px;width:44.45px">AH</div>
<div class="ch last" style="left:862.4px;width:11.6px"></div>
</div>
<div id="rowhdr"><div class="rline"></div>
<div class="rh" style="top:154.45px">1</div>
<div class="rh" style="top:168.34px">2</div>
<div class="rh" style="top:182.23px">3</div>
<div class="rh" style="top:196.12px">4</div>
<div class="rh" style="top:210.01px">5</div>
<div class="rh" style="top:223.9px">6</div>
<div class="rh" style="top:237.79px">7</div>
<div class="rh" style="top:251.68px">8</div>
<div class="rh" style="top:265.57px">9</div>
<div class="rh" style="top:279.46px">10</div>
<div class="rh" style="top:293.35px">11</div>
<div class="rh" style="top:307.24px">12</div>
<div class="rh" style="top:321.13px">13</div>
<div class="rh" style="top:335.02px">14</div>
<div class="rh" style="top:348.91px">15</div>
<div class="rh" style="top:362.8px">16</div>
<div class="rh" style="top:376.69px">17</div>
<div class="rh" style="top:390.58px">18</div>
<div class="rh" style="top:404.47px">19</div>
<div class="rh" style="top:418.36px">20</div>
<div class="rh" style="top:432.25px">21</div>
<div class="rh" style="top:446.14px">22</div>
<div class="rh" style="top:460.03px">23</div>
<div class="rh" style="top:473.92px">24</div>
<div class="rh" style="top:487.81px">25</div>
<div class="rh sel" style="top:501.7px">26</div>
<div class="rh" style="top:515.59px">27</div>
<div class="rh" style="top:529.48px">28</div>
<div class="rh" style="top:543.37px">29</div>
<div class="rh" style="top:557.26px">30</div>
<div class="rh" style="top:571.15px">31</div>
<div class="rh" style="top:585.04px">32</div>
<div class="rh" style="top:598.93px">33</div>
<div class="rh" style="top:612.82px">34</div>
<div class="rh" style="top:626.71px">35</div>
<div class="rh" style="top:640.6px">36</div>
</div>

<div id="title">
<svg class="abs" style="left:0;top:0" width="889" height="45" viewBox="0 0 889 45">
 <!-- faint office background pattern -->
 <g fill="#1d6a3f" opacity="0.4">
  <ellipse cx="640" cy="30" rx="60" ry="16"/><ellipse cx="700" cy="12" rx="45" ry="12"/>
  <ellipse cx="775" cy="30" rx="50" ry="14"/><ellipse cx="850" cy="14" rx="40" ry="12"/>
  <ellipse cx="560" cy="10" rx="40" ry="9"/>
 </g>
 <!-- save icon -->
 <g fill="none" stroke="#fff" stroke-width="1.1">
  <path d="M15.500 7.300h9.600v9.300h-8.200l-1.400-1.400z"/>
  <path d="M17.500 7.500v3.400h5.600V7.500" />
  <path d="M18.100 16.500v-3.200h4.400v3.200" fill="#fff"/>
 </g>
 <!-- undo / redo (dimmed) -->
 <g fill="none" stroke="#6fa685" stroke-width="1.1">
  <path d="M36.2 10.2h5.2a2.6 2.6 0 0 1 0 5.2h-1.6"/><path d="M38.6 7.6l-2.6 2.6 2.6 2.6"/>
  <path d="M68.4 10.2h-5.2a2.6 2.6 0 0 0 0 5.2h1.6"/><path d="M66 7.6l2.6 2.6-2.6 2.6"/>
 </g>
 <path d="M49.3 10.6h3l-1.5 1.6zM73.6 10.6h3l-1.5 1.6z" fill="#6fa685"/>
 <path d="M86.4 9.3h3.4M86.6 11.2h3l-1.5 1.7z" fill="#fff" stroke="#fff" stroke-width="0.9"/>
 <!-- window controls -->
 <g fill="none" stroke="#fff" stroke-width="0.9">
  <rect x="772.3" y="7.3" width="9.6" height="6.8"/><path d="M777.1 12.6V9.4M775.5 10.8l1.6-1.6 1.6 1.6" />
  <path d="M806.5 11h7.2"/>
  <rect x="838.3" y="8.6" width="5.6" height="5.6"/><path d="M840 8.6V7h5.6v5.6h-1.7"/>
  <path d="M869.6 7.2l7 7M876.6 7.2l-7 7"/>
 </g>
 <!-- lightbulb -->
 <g fill="none" stroke="#fff" stroke-width="0.9">
  <path d="M375.4 36.2c0-1.4-2-2.2-2-4.6a3.3 3.3 0 0 1 6.6 0c0 2.4-2 3.2-2 4.6z"/><path d="M375.6 37.8h2.4"/>
 </g>
 <!-- share icon -->
 <g fill="none" stroke="#fff" stroke-width="0.9">
  <path d="M849.400 31v7h7.800v-2.600"/><path d="M851.400 35.400c.6-2.800 2.600-4 5.600-4M855 28.800l2.600 2.600-2.600 2.600"/>
 </g>
</svg>
<div class="t" style="left:321.200px;top:5.600px;letter-spacing:0.045px">thong ke lo dan mien nam theo cau&nbsp; [Compatibility Mode]&nbsp; -&nbsp; Excel</div>
<div class="t" style="left:721px;top:5.6px">Kien truc</div>
<div class="t" style="left:13.6px;top:29.4px">File</div>
<div class="t" style="left:94.6px;top:29.4px">Insert</div>
<div class="t" style="left:134.2px;top:29.4px">Page Layout</div>
<div class="t" style="left:199.8px;top:29.4px">Formulas</div>
<div class="t" style="left:254px;top:29.4px">Data</div>
<div class="t" style="left:290.6px;top:29.4px">Review</div>
<div class="t" style="left:336.6px;top:29.4px">View</div>
<div class="t" style="left:386px;top:29.400px;letter-spacing:0.1px">Tell me what you want to do</div>
<div class="t" style="left:864.200px;top:29.400px;font-size:8px">Share</div>
</div>
<div id="hometab">Home</div>
<div id="ribbon"><div class="t" style="left:6.8px;top:53.3px;">Clipboard</div>
<div class="tc" style="left:126.0px;top:53.3px;">Font</div>
<div class="tc" style="left:289.4px;top:53.3px;">Alignment</div>
<div class="tc" style="left:430.0px;top:53.3px;">Number</div>
<div class="tc" style="left:546.0px;top:53.3px;">Styles</div>
<div class="tc" style="left:656.0px;top:53.3px;">Cells</div>
<div class="tc" style="left:768.4px;top:53.3px;">Editing</div>
<div class="sep" style="left:59.2px;top:3.5px;height:58.0px"></div>
<div class="sep" style="left:203.8px;top:3.5px;height:58.0px"></div>
<div class="sep" style="left:386.2px;top:3.5px;height:58.0px"></div>
<div class="sep" style="left:484.0px;top:3.5px;height:58.0px"></div>
<div class="sep" style="left:609.6px;top:3.5px;height:58.0px"></div>
<div class="sep" style="left:703.4px;top:3.5px;height:58.0px"></div>
<div class="sep" style="left:833.4px;top:3.5px;height:58.0px"></div>
<div class="tc" style="left:17.6px;top:29.3px;letter-spacing:-0.2px">Paste</div>
<div class="inp" style="left:62.4px;top:7.9px;width:77.0px"></div>
<div class="inp" style="left:139.8px;top:7.9px;width:29.8px"></div>
<div class="t" style="left:65.0px;top:10.5px;">Calibri</div>
<div class="t" style="left:142.2px;top:10.5px;">11</div>
<div class="t" style="left:67.4px;top:31.7px;font-weight:bold;font-size:8.4px;color:#4a4a4a">B</div>
<div class="t" style="left:83.6px;top:31.7px;font-style:italic;font-family:'Liberation Serif',serif;font-size:9.6px;color:#444">I</div>
<div class="t" style="left:97.4px;top:31.7px;text-decoration:underline;font-size:8.6px;color:#4a4a4a">U</div>
<div class="sep" style="left:119.4px;top:30.0px;height:14.0px"></div>
<div class="sep" style="left:150.0px;top:30.0px;height:14.0px"></div>
<div style="position:absolute;left:237px;top:7.5px;width:15px;height:16px;background:#c6c6c6"></div>
<div class="sep" style="left:255.4px;top:8.5px;height:14.5px"></div>
<div class="sep" style="left:255.4px;top:30.0px;height:14.0px"></div>
<div class="sep" style="left:292.4px;top:6.5px;height:38.0px"></div>
<div class="t" style="left:310.6px;top:10.5px;">Wrap Text</div>
<div class="t" style="left:310.6px;top:31.7px;">Merge &amp; Center</div>
<div class="inp" style="left:389.8px;top:7.9px;width:90.8px"></div>
<div class="t" style="left:392.2px;top:10.5px;">General</div>
<div class="t" style="left:395.2px;top:32.1px;font-size:11.400px">$</div>
<div class="t" style="left:417.0px;top:32.3px;font-size:10.400px">%</div>
<div class="t" style="left:434.2px;top:28.1px;font-size:12.500px;font-weight:bold;font-family:'Liberation Serif',serif">,</div>
<div class="sep" style="left:447.0px;top:30.0px;height:14.0px"></div>
<div class="tc" style="left:512.0px;top:28.9px;">Conditional</div>
<div class="tc" style="left:510.0px;top:39.9px;">Formatting</div>
<div class="tc" style="left:557.0px;top:28.9px;">Format as</div>
<div class="tc" style="left:554.0px;top:39.9px;">Table</div>
<div class="tc" style="left:591.4px;top:28.9px;">Cell</div>
<div class="tc" style="left:588.6px;top:39.9px;">Styles</div>
<div class="tc" style="left:626.8px;top:28.5px;">Insert</div>
<div class="tc" style="left:656.0px;top:28.5px;">Delete</div>
<div class="tc" style="left:685.4px;top:28.5px;">Format</div>
<div class="t" style="left:722.4px;top:5.1px;">AutoSum</div>
<div class="t" style="left:722.4px;top:20.7px;">Fill</div>
<div class="t" style="left:722.4px;top:36.9px;">Clear</div>
<div class="tc" style="left:785.4px;top:28.5px;">Sort &amp;</div>
<div class="tc" style="left:782.6px;top:39.9px;">Filter</div>
<div class="tc" style="left:815.2px;top:28.5px;">Find &amp;</div>
<div class="tc" style="left:812.6px;top:39.9px;">Select</div>
<svg class="abs" style="left:0;top:0" width="889" height="64" viewBox="0 44.5 889 64">
<!-- paste clipboard -->
<g>
 <rect x="9.300" y="52.300" width="16" height="17" rx="1" fill="#efc676"/>
 <rect x="13.4" y="50.6" width="7.6" height="4.2" rx="0.8" fill="#6b6b6b"/>
 <rect x="15.200" y="49.600" width="4" height="2.400" rx="1" fill="#6b6b6b"/><circle cx="17.200" cy="51.200" r="0.700" fill="#efc676"/>
 <path d="M19.400 58h6.400l3.200 3.200v9.600h-9.600z" fill="#fff" stroke="#7a7a7a" stroke-width="0.700"/>
 <path d="M25.800 58v3.200h3.200" fill="none" stroke="#7a7a7a" stroke-width="0.7"/>
</g>
<!-- cut -->
<g fill="none" stroke="#4a4a4a" stroke-width="1.200">
 <path d="M36.800 48.800l4.800 6.800M42.600 48.800l-4.800 6.800"/>
</g>
<g fill="#f6f9fd" stroke="#3c72b8" stroke-width="0.900">
 <ellipse cx="37" cy="57" rx="2" ry="1.500"/><ellipse cx="42.400" cy="57" rx="2" ry="1.500"/>
</g>
<!-- copy -->
<g fill="#fff" stroke="#666" stroke-width="0.800">
 <path d="M34.200 65.400h3.200l1.400 1.400v6h-4.600z"/>
 <path d="M38.400 67.800h4.200l2.200 2.200v4.600h-6.400z"/>
 <path d="M36 68v3.600M39.800 71.400h3.600M39.800 72.800h3.600" stroke="#3c72b8" stroke-width="0.700"/>
</g>
<!-- format painter -->
<g>
 <path d="M34.300 85.600l4.700-2 2.400 4-3 3z" fill="#efc172"/>
 <path d="M39 83.600l1.600-1 2.400 4-1.600 1z" fill="#5a5a5a"/>
 <path d="M41.800 84.600l2.800-2.500" stroke="#5a5a5a" stroke-width="1.800" fill="none"/>
</g>
<!-- dialog launchers -->
<g fill="none" stroke="#777" stroke-width="0.7">
 <path d="M51.6 101.2h3.4M51.6 101.2v3.4M53 102.8l2.4 2.4M55.6 103.4v2h-2"/>
 <path d="M196.2 101.2h3.4M196.2 101.2v3.4M197.6 102.8l2.4 2.4M200.2 103.4v2h-2"/>
 <path d="M378.6 101.2h3.4M378.6 101.2v3.4M380 102.8l2.4 2.4M382.6 103.4v2h-2"/>
 <path d="M476.4 101.2h3.4M476.4 101.2v3.4M477.8 102.8l2.4 2.4M480.4 103.4v2h-2"/>
</g>
<!-- grow / shrink font -->
<g fill="#444" font-family="Liberation Sans, sans-serif">
 <text x="173.6" y="64.4" font-size="10">A</text>
 <text x="188.8" y="64.4" font-size="8.6">A</text>
</g>
<path d="M179.8 56.6l1.4-1.6 1.4 1.6z" fill="#3c72b8"/>
<path d="M194.4 55.2l1.4 1.6 1.4-1.6z" fill="#3c72b8"/>
<!-- borders icon -->
<g fill="none" stroke="#b5b5b5" stroke-width="0.7">
 <rect x="125.6" y="76.8" width="9" height="9"/><path d="M130.1 76.8v9M125.6 81.3h9"/>
</g>
<!-- fill colour -->
<g>
 <path d="M158.2 79.4l3-3.2 3.4 3.4-3.2 3.2z" fill="#fff" stroke="#555" stroke-width="0.8"/>
 <path d="M159.6 77.4c-.6-2 1.8-2.6 2.2-.8" fill="none" stroke="#555" stroke-width="0.7"/>
 <path d="M165.2 79.8c.8 1.2 1.2 2 .4 2.6-.8.4-1.4-.6-.4-2.6z" fill="#3c72b8"/>
 <rect x="155.4" y="84.6" width="10.8" height="2.6" fill="#ffff00"/>
</g>
<!-- font colour -->
<text x="180.2" y="84" font-size="9.6" fill="#444" font-family="Liberation Sans, sans-serif">A</text>
<rect x="178.6" y="84.6" width="10.8" height="2.6" fill="#ff0000"/>
<!-- vertical align icons -->
<g stroke="#666" stroke-width="0.8" fill="none">
 <path d="M209.2 54.4h9.6M209.2 56.4h9.6M209.2 58.4h9.6" />
 <path d="M224.3 57.2h9.6M224.3 59.3h9.6M224.3 61.3h9.6" />
 <path d="M239.8 60.4h9.8M239.8 62.4h9.8M239.8 64.5h9.8" />
 <!-- horizontal align -->
 <path d="M209.4 77.6h9.2M209.4 79.8h6M209.4 82h9.2M209.4 84.2h6"/>
 <path d="M224.4 77.6h9.2M226 79.8h6M224.4 82h9.2M226 84.2h6"/>
 <path d="M240 77.6h9.2M243.2 79.8h6M240 82h9.2M243.2 84.2h6"/>
</g>
<!-- orientation -->
<text x="260.600" y="61.600" font-size="7" fill="#555" font-family="Liberation Sans, sans-serif" transform="rotate(-48 263.5 59.5)">ab</text>
<g fill="none" stroke="#555" stroke-width="0.900">
 <path d="M264.800 64.200l6.400-6"/><path d="M269.600 58l1.800.1.100 1.800" stroke-width="0.800"/>
</g>
<!-- indent -->
<g fill="none" stroke="#8a8a8a" stroke-width="0.800">
 <path d="M260.400 76.700h11.300M266.300 79.300h5.400M266.300 81.500h5.400M266.300 83.600h5.400M260.400 85.600h11.300"/>
 <path d="M275.900 76.700h11.300M281.800 79.300h5.400M281.800 81.500h5.400M281.800 83.600h5.400M275.900 85.600h11.300"/>
</g>
<g fill="none" stroke="#3c72b8" stroke-width="1.200">
 <path d="M265.200 81h-4M263 79l-2 2 2 2"/>
 <path d="M276.400 81h4M278.600 79l2 2-2 2"/>
</g>
<!-- wrap text -->
<text x="298.600" y="59.600" font-size="7.200" fill="#555" font-family="Liberation Sans, sans-serif">ab</text>
<text x="299" y="64.800" font-size="7.200" fill="#555" font-family="Liberation Sans, sans-serif">c</text>
<path d="M306.800 61.400l-3 2.200M303.600 61.800l.1 1.900 1.900.1" fill="none" stroke="#3c72b8" stroke-width="0.900"/>
<!-- merge & center -->
<g fill="none" stroke="#666" stroke-width="0.800">
 <rect x="297.300" y="75.500" width="10.400" height="10.400" fill="#fff"/><path d="M297.300 78.200h10.400M297.300 83.800h10.400M302.500 75.500v2.700M302.500 83.800v2.100"/>
 <path d="M299.200 81h6.600M300.400 79.800l-1.200 1.200 1.200 1.200M304.600 79.800l1.200 1.200-1.200 1.200" stroke="#3c72b8" stroke-width="0.900"/>
</g>
<!-- decimals -->
<g font-family="Liberation Sans, sans-serif" fill="#555" font-size="5.400" letter-spacing="-0.2">
 <text x="457.600" y="80.600">.0</text><text x="454.200" y="86">.00</text>
 <text x="470.400" y="80.600">.00</text><text x="473.800" y="86">.0</text>
</g>
<g fill="none" stroke="#3c72b8" stroke-width="0.900">
 <path d="M456.800 78.600h-4M454.600 76.900l-1.700 1.700 1.700 1.700"/>
 <path d="M468 84h4M470.200 82.300l1.700 1.700-1.700 1.700"/>
</g>
<!-- conditional formatting -->
<g>
 <rect x="502.6" y="50.4" width="19.4" height="16.4" fill="#fff" stroke="#8a8a8a" stroke-width="0.7"/>
 <path d="M507.4 50.4v16.4M502.6 54.5h19.4M502.6 58.6h19.4M502.6 62.7h19.4" stroke="#b9b9b9" stroke-width="0.6"/>
 <rect x="507.8" y="50.8" width="4" height="3.5" fill="#d65532"/>
 <rect x="507.8" y="54.9" width="7.6" height="3.5" fill="#3c72b8"/>
 <rect x="507.8" y="59" width="5.4" height="3.5" fill="#d65532"/>
 <rect x="507.8" y="63.1" width="2.6" height="3.4" fill="#3c72b8"/>
 <rect x="513.4" y="62" width="9.4" height="8" fill="#f3f3f3" stroke="#555" stroke-width="0.8"/>
 <path d="M515.4 65h5.4M515.4 67.2h5.4M519.6 63.4l-3 5.4" stroke="#555" stroke-width="0.6"/>
</g>
<!-- format as table -->
<g>
 <rect x="547.500" y="51.400" width="17.300" height="14.200" fill="#fff" stroke="#8a8a8a" stroke-width="0.700"/>
 <rect x="547.900" y="51.800" width="16.500" height="3.200" fill="#dcdcdc"/>
 <rect x="552" y="55" width="10" height="10.200" fill="#c5d9f1"/>
 <path d="M551.800 51.400v14.200M556.100 51.400v14.200M560.400 51.400v14.200M547.500 55h17.300M547.500 58.500h17.300M547.500 62h17.300" stroke="#a9a9a9" stroke-width="0.550"/>
 <path d="M568.600 55.200l-7.400 9-2.200-1.800 7.800-8.600z" fill="#6a6a6a"/>
 <path d="M559.400 62l3 2.400c-1 3.600-4.400 5.800-10.400 5.800 2.800-1.400 3.600-5.400 7.400-8.200z" fill="#3c72b8"/>
 <path d="M558.800 65.400a1.600 1.600 0 0 1 2.200 1.800" fill="none" stroke="#dbe8f7" stroke-width="0.800"/>
</g>
<!-- cell styles -->
<g>
 <rect x="582" y="50.600" width="17.600" height="14.400" fill="#fff" stroke="#8a8a8a" stroke-width="0.700"/>
 <rect x="585.700" y="53.800" width="10.100" height="6.800" fill="#c5d9f1" stroke="#a9a9a9" stroke-width="0.500"/>
 <path d="M585.700 50.600v14.400M595.800 50.600v14.400M582 53.800h17.600M582 60.600h17.600" stroke="#a9a9a9" stroke-width="0.550"/>
 <path d="M603 54.800l-7.400 9-2.200-1.800 7.800-8.600z" fill="#6a6a6a"/>
 <path d="M593.800 61.600l3 2.400c-1 3.600-4.400 5.800-10.400 5.800 2.800-1.400 3.600-5.400 7.400-8.200z" fill="#3c72b8"/>
 <path d="M593.200 65a1.600 1.600 0 0 1 2.200 1.800" fill="none" stroke="#dbe8f7" stroke-width="0.800"/>
</g>
<!-- insert -->
<g fill="#fff" stroke="#7d7d7d" stroke-width="0.7">
 <rect x="618.400" y="50.600" width="10" height="3.6"/><path d="M623.4 50.600v3.600"/>
 <rect x="618.400" y="61" width="10" height="7.600"/><path d="M623.4 61v7.600M618.400 64.800h10"/>
 <rect x="626.800" y="55.600" width="9" height="3.800" fill="#c5d9f1"/>
 <path d="M625.400 57.500h-6M621.200 55.700l-1.800 1.800 1.800 1.800" fill="none" stroke="#3c72b8" stroke-width="0.9"/>
</g>
<!-- delete -->
<g fill="#fff" stroke="#7d7d7d" stroke-width="0.7">
 <rect x="646.400" y="50.600" width="10" height="3.600"/><path d="M651.400 50.600v3.600"/>
 <rect x="646.400" y="61" width="10" height="7.600"/><path d="M651.400 61v7.600M646.400 64.800h10"/>
 <rect x="650.400" y="55.600" width="6" height="3.800" fill="#c5d9f1"/>
 <path d="M658.200 53.400l7.400 7.600M665.600 53.400l-7.400 7.600" fill="none" stroke="#d65532" stroke-width="1.2"/>
</g>
<!-- format -->
<g fill="#fff" stroke="#7d7d7d" stroke-width="0.7">
 <rect x="676.200" y="54" width="17.600" height="14.600"/>
 <path d="M681 54v14.600M689 54v14.600M676.200 58h17.600M676.200 64.600h17.600"/>
 <rect x="681" y="58" width="8" height="6.600" fill="#3c72b8" stroke="none"/>
 <path d="M676 51.200h18M676 49.600v3.200M694 49.600v3.200M678.200 49.800l-1.800 1.400 1.800 1.400M691.800 49.800l1.800 1.400-1.800 1.400" fill="none" stroke="#3c72b8" stroke-width="0.7"/>
</g>
<!-- autosum sigma -->
<path d="M719.2 48.900h-8.800l4.500 4.800-4.500 4.900h8.800" fill="none" stroke="#3a3a3a" stroke-width="1.4"/>
<!-- fill -->
<g fill="none" stroke="#555" stroke-width="0.8">
 <rect x="710.800" y="65.600" width="8.600" height="9.600" fill="#fff"/>
 <path d="M710.800 67.200h8.600" stroke-width="1.4"/>
 <path d="M715.100 68.800v4.600M713.200 71.600l1.900 1.900 1.900-1.900" stroke="#3c72b8" stroke-width="0.9"/>
</g>
<!-- clear (eraser) -->
<path d="M711.200 87.200l4.600-4.800 3.400 2.600-4.600 5h-2z" fill="#ee7f96" stroke="#d9607c" stroke-width="0.400"/>
<path d="M711.200 87.200l1.400 2.800h2z" fill="#fff" stroke="#c94870" stroke-width="0.4"/>
<!-- sort & filter -->
<g font-family="Liberation Sans, sans-serif" font-weight="bold">
 <text x="775" y="58.500" font-size="10.200" fill="#3c72b8">A</text>
 <text x="775.500" y="68.800" font-size="10.200" fill="#9a4fb0">Z</text>
</g>
<path d="M783.800 55.600h11.400v1.200l-4.500 4.400v4.200l-2.400-1.200v-3l-4.500-4.400z" fill="#8c8c8c"/>
<!-- find & select -->
<g fill="none" stroke="#3c72b8" stroke-width="1.5">
 <circle cx="818.200" cy="56.200" r="5.700" fill="#fbfdff" stroke-width="1.700"/>
 <path d="M813.800 60.800l-6.800 7" stroke-width="2.200"/>
</g>
<!-- collapse chevron -->
<path d="M876 104l2.700-2.700 2.700 2.700" fill="none" stroke="#555" stroke-width="1.400"/>
<path d="M15.15 88.60h3.7l-1.85 2.1zM49.35 69.60h3.7l-1.85 2.1zM132.75 58.70h3.7l-1.85 2.1zM162.55 58.70h3.7l-1.85 2.1zM110.15 80.80h3.7l-1.85 2.1zM140.15 80.80h3.7l-1.85 2.1zM170.15 80.80h3.7l-1.85 2.1zM193.75 80.80h3.7l-1.85 2.1zM274.15 58.70h3.7l-1.85 2.1zM376.15 80.80h3.7l-1.85 2.1zM473.15 58.70h3.7l-1.85 2.1zM407.15 80.80h3.7l-1.85 2.1zM531.75 89.00h3.7l-1.85 2.1zM565.55 89.00h3.7l-1.85 2.1zM601.15 89.00h3.7l-1.85 2.1zM624.95 87.80h3.7l-1.85 2.1zM654.15 87.80h3.7l-1.85 2.1zM683.55 87.80h3.7l-1.85 2.1zM764.15 54.20h3.7l-1.85 2.1zM734.75 69.80h3.7l-1.85 2.1zM743.55 86.00h3.7l-1.85 2.1zM794.15 89.00h3.7l-1.85 2.1zM825.55 89.00h3.7l-1.85 2.1z" fill="#5c5c5c"/>
</svg>
</div>
<div id="fbar">
 <div class="box" style="left:3.200px;width:71px"></div>
 <div class="t" style="left:8.4px;top:12.2px">AQ26</div>
 <div class="box" style="left:95.4px;width:76.2px"></div>
 <div class="box" style="left:173.6px;width:712px"></div>
 <svg class="abs" style="left:0;top:0" width="889" height="33" viewBox="0 0 889 33">
  <path d="M64.300 15.300h4.400l-2.200 2.400z" fill="#555"/>
  <g fill="#b0b0b0"><circle cx="84.6" cy="14.2" r="0.55"/><circle cx="84.6" cy="16.6" r="0.55"/><circle cx="84.6" cy="19" r="0.55"/></g>
  <g fill="none" stroke="#bdbdbd" stroke-width="0.9">
   <path d="M105.4 14l5.6 5.6M111 14l-5.6 5.6"/>
   <path d="M130 17.200l2.400 2.400 4.600-5.800" stroke-width="1.100"/>
  </g>
  <path d="M876.600 15.400l2.600 2.600 2.600-2.600" fill="none" stroke="#6a6a6a" stroke-width="1.300"/>
 </svg>
 <div class="t" style="left:154.4px;top:11.6px;font-family:'Liberation Serif',serif;font-style:italic;font-size:10px;color:#555">f<span style="font-size:7.5px">x</span></div>
</div>


<div id="vscroll">
 <div class="tr"></div>
 <div class="b" style="top:0.8px;height:10.4px"></div>
 <div class="b" style="top:10.9px;height:472px"></div>
 <div class="b" style="top:497.6px;height:9.6px"></div>
 <svg class="abs" style="left:0;top:0" width="15" height="507" viewBox="0 0 15 507">
  <path d="M5 7.400l2.500-2.800 2.500 2.800z" fill="#666"/>
  <path d="M5 501l2.500 2.800 2.500-2.800z" fill="#666"/>
 </svg>
</div>

<div id="tabbar">
 <div id="sheet1">Sheet1</div>
 <svg class="abs" style="left:0;top:0" width="889" height="20" viewBox="0 648 889 20">
  <path d="M21.400 655.600l-2 2.200 2 2.200z" fill="#c0c0c0"/>
  <path d="M39 655.600l2 2.200-2 2.200z" fill="#c0c0c0"/>
  <circle cx="143" cy="658" r="4.700" fill="none" stroke="#6e6e6e" stroke-width="1"/>
  <path d="M140.400 658h5.200M143 655.400v5.200" stroke="#6e6e6e" stroke-width="1.200"/>
  <g fill="#a0a0a0"><circle cx="534" cy="655.600" r="0.55"/><circle cx="534" cy="658" r="0.55"/><circle cx="534" cy="660.400" r="0.55"/></g>
 </svg>
 <div id="hscroll">
  <div class="tr"></div>
  <div class="b" style="left:545px;width:11px"></div>
  <div class="b" style="left:632.600px;width:97.600px"></div>
  <div class="b" style="left:865px;width:10.8px"></div>
  <svg class="abs" style="left:0;top:0" width="889" height="20" viewBox="0 648 889 20">
   <path d="M552 655.400l-2.800 2.600 2.800 2.600z" fill="#555"/>
   <path d="M869.200 655.400l2.800 2.600-2.800 2.600z" fill="#555"/>
  </svg>
 </div>
</div>

<div id="status">
 <div class="t" style="left:5.200px;top:2.200px">Ready</div>
 <div style="position:absolute;left:690.400px;top:0;width:25.600px;height:15px;background:#c8c8c8"></div>
 <svg class="abs" style="left:0;top:0" width="889" height="15" viewBox="0 668 889 15">
  <g fill="none" stroke="#6a6a6a" stroke-width="0.8">
   <rect x="699" y="671.400" width="8.400" height="8"/><path d="M701.800 671.400v8M704.600 671.400v8M699 674h8.400M699 676.800h8.400"/>
   <rect x="725" y="671.400" width="8.800" height="8"/><rect x="727.200" y="673.400" width="4.400" height="4.200"/>
   <rect x="751.400" y="671.400" width="8.800" height="8"/><path d="M754.400 671.400v4.200h3v-4.200"/>
  </g>
  <path d="M772.400 675.400h3.400" stroke="#555" stroke-width="1"/>
  <path d="M780 675.400h68.400" stroke="#9a9a9a" stroke-width="0.8"/>
  <rect x="812.800" y="671.200" width="2.800" height="8.400" fill="#666"/>
  <path d="M851.400 675.400h4.400M853.600 673.200v4.400" stroke="#555" stroke-width="1"/>
 </svg>
 <div class="t" style="left:864.400px;top:2.200px;letter-spacing:-0.2px">100%</div>
</div>

<div id="taskbar">
 <div id="search">
  <svg class="abs" style="left:0;top:0" width="239" height="28" viewBox="33.2 683 239 28">
   <circle cx="47.200" cy="697" r="5.600" fill="none" stroke="#1a1a1a" stroke-width="2"/>
   <g fill="none" stroke="#555" stroke-width="0.9">
    <rect x="256.400" y="691.400" width="3.600" height="6.800" rx="1.800" fill="#d0d0d0"/>
    <path d="M254.600 696.200a3.600 3.600 0 0 0 7.200 0M258.200 699.800v2.200M256.400 702.200h3.600"/>
   </g>
  </svg>
  <div class="t">Type here to search</div>
 </div>
 <svg class="abs" style="left:0;top:0" width="889" height="28" viewBox="0 683 889 28">
  <!-- windows logo -->
  <g fill="#fff">
   <path d="M11 692.600l4.600-.700v4.600H11zM16.300 691.800l5.900-.9v5.600h-5.900zM11 697.200h4.600v4.600l-4.600-.700zM16.300 697.200h5.900v5.600l-5.900-.9z"/>
  </g>
  <!-- task view -->
  <g fill="none" stroke="#fff" stroke-width="0.9">
   <rect x="284.600" y="693.400" width="6.400" height="7.400"/><path d="M283.400 691.800h8.800M283.400 702.400h8.800"/><path d="M294 691.600v11"/>
  </g>
  <rect x="293.200" y="694.400" width="1.700" height="2.600" fill="#fff"/>
  <!-- edge -->
  <path d="M318.600 697.400c.3-4.400 3.300-6.800 6.800-6.800 3.900 0 6.400 2.900 6.400 7v1.200h-9c.2 2.200 1.800 3.200 4 3.200 1.600 0 3-.4 4.400-1.200v2.800c-1.400.8-3.200 1.200-5.200 1.200-4.200 0-6.800-2.600-6.800-6.600 0-1 .2-2 .6-2.800 1-2 2.600-3.400 4.600-4-1.400 1-2.200 2.200-2.600 3.800h5.800c0-1.800-1-3-2.800-3-2.600 0-5 2-6.200 5.200z" fill="#1e88e5"/>
  <!-- folder -->
  <path d="M351.400 691.400h5l1.400 1.400h8.600v9.800h-15z" fill="#f6c644"/>
  <path d="M351.400 694.200h15v8.400h-15z" fill="#fbdc7a"/>
  <rect x="355.600" y="698.400" width="6.600" height="4.200" fill="#3a96dd"/>
  <rect x="344.600" y="709.600" width="27.400" height="1.400" fill="#76b9ed"/>
  <!-- coc coc -->
  <circle cx="392.800" cy="697" r="8" fill="#5aa94a"/>
  <circle cx="392.800" cy="697" r="4.400" fill="none" stroke="#fff" stroke-width="1.800"/>
  <path d="M394 695.600l5-5M395.200 697l6-2.400M393.400 694.600l2.400-5.200" stroke="#f08a24" stroke-width="1.300"/>
  <!-- photos-like icon -->
  <g>
   <rect x="422.600" y="690.200" width="13.400" height="10.400" fill="#e9d9a8" stroke="#c9b477" stroke-width="0.5" transform="rotate(8 429 695)"/>
   <rect x="420" y="692.400" width="13.400" height="10.400" fill="#5aa7d8" stroke="#e8e8e8" stroke-width="0.900"/>
   <path d="M420.400 702.400l4.400-4.600 3 2.800 2.200-1.800 3 3.600z" fill="#6fb35a"/>
  </g>
  <!-- autocad -->
  <rect x="452" y="688.600" width="17" height="17" fill="#e9e4e2"/>
  <text x="453.400" y="703.600" font-family="Liberation Sans, sans-serif" font-weight="bold" font-size="17" fill="#c8232c">A</text>
  <rect x="446.600" y="709.600" width="27.400" height="1.400" fill="#76b9ed"/>
  <!-- chrome -->
  <circle cx="494.600" cy="697" r="8" fill="#db4437"/>
  <path d="M494.600 697l-7-3.900a8 8 0 0 0 3.600 11.100z" fill="#0f9d58"/>
  <path d="M494.600 697l-3.400 7.200a8 8 0 0 0 11.200-5.800c.2-1 .2-2.200-.2-3.400z" fill="#ffcd40"/>
  <path d="M494.600 697h7.800a8 8 0 0 0-1.200-4z" fill="#db4437"/>
  <circle cx="494.600" cy="697" r="3.700" fill="#fff"/>
  <circle cx="494.600" cy="697" r="2.900" fill="#4285f4"/>
  <rect x="481" y="709.600" width="27.400" height="1.400" fill="#76b9ed"/>
  <!-- excel (active) -->
  <rect x="512" y="683" width="33.400" height="28" fill="#343a41"/>
  <rect x="512" y="709.600" width="33.400" height="1.400" fill="#76b9ed"/>
  <rect x="526.600" y="690.600" width="10.400" height="12.800" fill="#2f8552"/>
  <path d="M529 693.400h7.200M529 696.200h7.200M529 699h7.200M529 701.800h7.200M533.200 691.600v10.800" stroke="#d7eadf" stroke-width="0.800"/>
  <rect x="529" y="691.800" width="7.200" height="10.400" fill="none" stroke="#d7eadf" stroke-width="0.800"/>
  <path d="M520 690.200l9.800-1.600v16.800l-9.800-1.600z" fill="#1f7044"/>
  <text x="522" y="700.400" font-family="Liberation Sans, sans-serif" font-weight="bold" font-size="8" fill="#fff">X</text>
  <!-- tray: people -->
  <g fill="none" stroke="#fff" stroke-width="0.900">
   <circle cx="702" cy="693.200" r="1.800"/><path d="M698.800 699.200c.4-2.400 1.800-3.400 3.200-3.400s2.800 1 3.200 3.400"/>
   <circle cx="697.400" cy="697.400" r="1.600"/><path d="M694.400 702.800c.4-2.200 1.600-3.200 3-3.200s2.600 1 3 3.200"/>
  </g>
  <!-- chevron -->
  <path d="M720.600 698.600l3.600-3.600 3.600 3.600" fill="none" stroke="#fff" stroke-width="1"/>
  <!-- V icon -->
  <rect x="735.600" y="691.600" width="11" height="10.800" fill="#f4f4f4" stroke="#d33" stroke-width="0.800"/>
  <text x="737.400" y="700.800" font-family="Liberation Sans, sans-serif" font-weight="bold" font-size="10" fill="#d42a2a">V</text>
  <!-- network -->
  <g fill="none" stroke="#fff" stroke-width="0.900">
   <rect x="754.800" y="692.800" width="8.400" height="5.600"/><path d="M756 701.600h6M759 698.400v3.200"/><path d="M752.600 691.600v6.400" />
  </g>
  <!-- volume -->
  <g fill="none" stroke="#fff" stroke-width="0.900">
   <path d="M769 695.400h1.800l2.600-2.400v8l-2.600-2.400H769z"/>
   <path d="M775.200 695c.8.600.8 3.400 0 4M777 693.400c1.600 1.400 1.600 5.800 0 7.200M778.800 692c2.400 2.200 2.400 7.800 0 10"/>
  </g>
  <!-- notification -->
  <g fill="none" stroke="#fff" stroke-width="0.900">
   <path d="M860.600 691.600h10v7.600h-6.600l-2 2v-2h-1.400z"/><path d="M862.400 694h6.400M862.400 696.200h6.400"/>
  </g>
  <circle cx="871.600" cy="701.400" r="3.900" fill="#0a111a" stroke="#fff" stroke-width="0.800"/>
  <text x="870.200" y="704" font-family="Liberation Sans, sans-serif" font-size="6.600" fill="#fff">1</text>
 </svg>
 <div class="w" style="left:786.800px;top:9px">ENG</div>
 <div class="w" style="left:814.400px;top:3.400px">8:28 AM</div>
 <div class="w" style="left:812px;top:14.400px">10/3/2018</div>
</div>

</body></html>
